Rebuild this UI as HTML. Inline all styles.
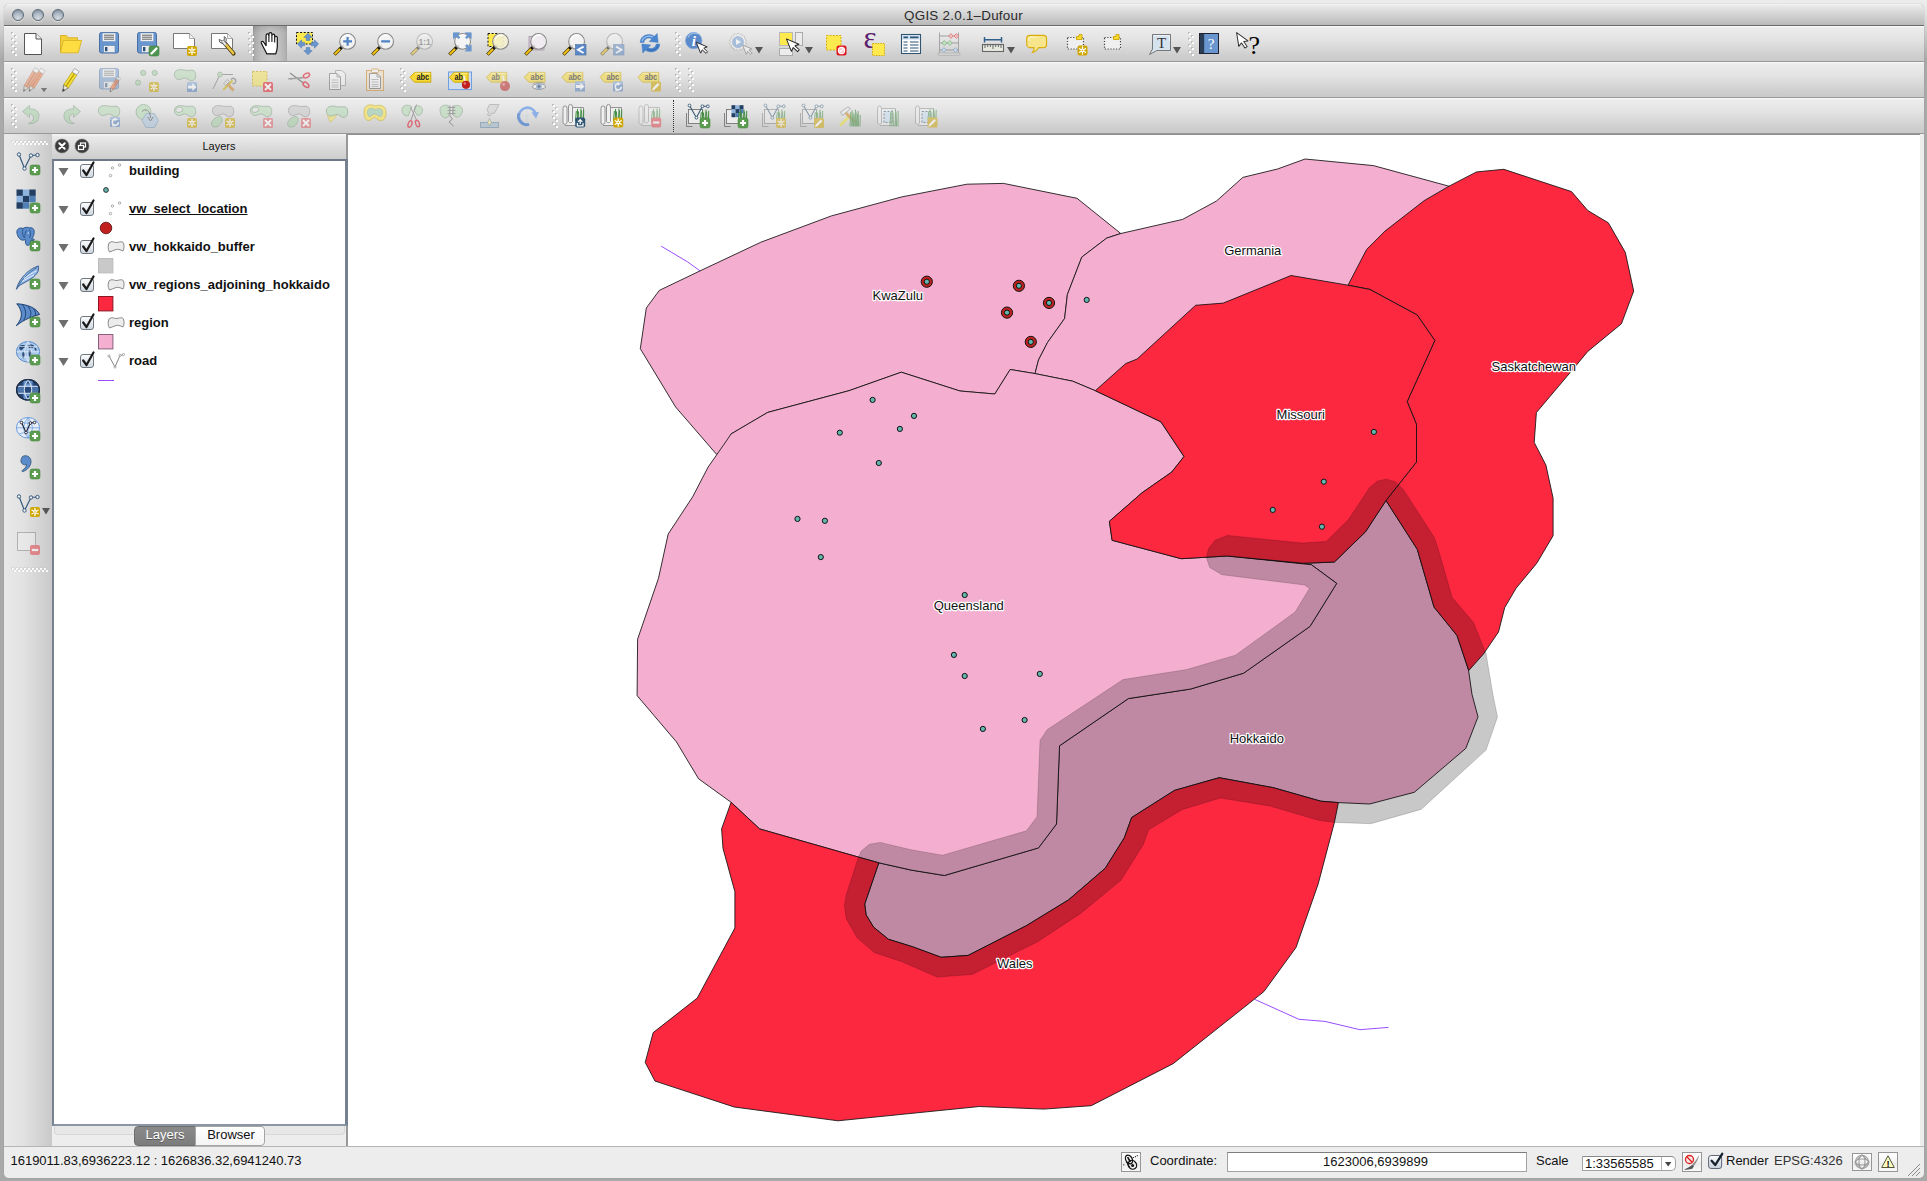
<!DOCTYPE html><html><head><meta charset="utf-8"><title>QGIS 2.0.1-Dufour</title><style>
*{box-sizing:border-box}
html,body{margin:0;padding:0}
body{width:1927px;height:1181px;position:relative;overflow:hidden;background:#a9a9a9;font-family:"Liberation Sans",Arial,sans-serif;font-size:13px;color:#111}
#bgtop{position:absolute;left:0;top:0;width:1927px;height:60px;background:linear-gradient(#ececec 0,#e9e9e9 8px,#a9a9a9 60px)}
#bgtop2{position:absolute;left:8px;top:0;width:1911px;height:5px;background:#ececec}
#win{position:absolute;left:4px;top:4px;width:1920px;height:1174px;border-radius:5px;background:#ededed;overflow:hidden;box-shadow:0 0 1px #777}
.abs{position:absolute}
#title{left:0;top:0;width:1920px;height:22px;background:linear-gradient(#ebebeb 0,#dedede 25%,#c9c9c9 70%,#b9b9b9 100%);border-bottom:1px solid #6b6b6b;border-top:1px solid #f4f4f4}
#title span{position:absolute;left:0;width:1920px;text-align:center;top:3px;font-size:13.4px;letter-spacing:0.25px;color:#2a2a2a;padding-right:1px}
.tl{position:absolute;top:5px;width:12px;height:12px;border-radius:6px;background:radial-gradient(circle at 50% 85%,#d5dae0 0,#b4bfc9 45%,#8b9aa8 80%);border:1px solid #5d6873;box-shadow:0 1px 0 rgba(255,255,255,.5)}
.tb{position:absolute;left:0;width:1920px;height:36px;background:linear-gradient(#fbfbfb 0,#ececec 2px,#e3e3e3 40%,#cecece 85%,#cacaca 100%);border-bottom:1px solid #989898}
#map{position:absolute;left:343px;top:130px;width:1574px;height:1012px;background:#fff;border-left:2px solid #989898;border-top:1px solid #8f8f8f;overflow:hidden}
#map svg{position:absolute;left:0.2px;top:0px}
#lstrip{left:0;top:130px;width:48px;height:1012px;background:linear-gradient(90deg,#e9e9e9 0,#e2e2e2 40%,#c9c9c9 100%)}
#ptitle{left:48px;top:130px;width:294px;height:27px;background:linear-gradient(#f6f6f6 0,#e9e9e9 3px,#d8d8d8 60%,#cbcbcb 100%)}
#ptitle span{position:absolute;left:0;width:100%;text-align:center;top:6px;font-size:11px;padding-left:40px}
#tree{left:48px;top:154px;width:296px;height:968px;background:#fff;border:2px solid #76828f;border-right-width:3px;border-top-color:#6d7986;border-bottom-color:#8a96a3}
#tabs{left:48px;top:1122px;width:295px;height:20px}
#status{left:0;top:1142px;width:1920px;height:32px;background:#ededed;border-top:1px solid #b5b5b5}
.row{position:absolute;left:0;height:19px;font-weight:bold;font-size:13px;white-space:nowrap}
.h{position:absolute;width:6px;height:26px;background-image:radial-gradient(circle at 1.5px 1.5px,#fff 0,#fff 1px,rgba(255,255,255,0) 1.6px),radial-gradient(circle at 1.2px 1.2px,#b5b5b5 0,#b5b5b5 1px,rgba(0,0,0,0) 1.6px);background-size:6px 6px,6px 6px;background-position:0 0,0 0}
.ic{position:absolute;width:24px;height:24px;overflow:visible}
.dd{position:absolute;width:0;height:0;border-left:3.5px solid transparent;border-right:3.5px solid transparent;border-top:5px solid #555}
</style></head><body>
<div id="bgtop"></div><div id="bgtop2"></div>
<div id="win">
<div id="title" class="abs"><span>QGIS 2.0.1&#8211;Dufour</span>
<i class="tl" style="left:8px;top:4px"></i>
<i class="tl" style="left:28px;top:4px"></i>
<i class="tl" style="left:48px;top:4px"></i>
</div>
<div class="tb" style="top:22px"></div>
<div class="tb" style="top:58px"></div>
<div class="tb" style="top:94px"></div>
<div class="abs" style="left:249px;top:22px;width:34px;height:35px;background:linear-gradient(rgba(0,0,0,.10) 0,rgba(0,0,0,0) 7px,rgba(255,255,255,.06) 100%),linear-gradient(90deg,#9a9a9a 0,#aaaaaa 2px,#bcbcbc 8px,#c6c6c6 50%,#bebebe 26px,#b0b0b0 32px,#a2a2a2 100%);"></div>
<i class="abs" style="left:8px;top:29px;width:2px;height:2px;background:#fdfdfd;box-shadow:-1px -1px 0 #bcbcbc"></i><i class="abs" style="left:11px;top:32px;width:2px;height:2px;background:#fdfdfd;box-shadow:-1px -1px 0 #bcbcbc"></i><i class="abs" style="left:8px;top:35px;width:2px;height:2px;background:#fdfdfd;box-shadow:-1px -1px 0 #bcbcbc"></i><i class="abs" style="left:11px;top:38px;width:2px;height:2px;background:#fdfdfd;box-shadow:-1px -1px 0 #bcbcbc"></i><i class="abs" style="left:8px;top:41px;width:2px;height:2px;background:#fdfdfd;box-shadow:-1px -1px 0 #bcbcbc"></i><i class="abs" style="left:11px;top:44px;width:2px;height:2px;background:#fdfdfd;box-shadow:-1px -1px 0 #bcbcbc"></i><i class="abs" style="left:8px;top:47px;width:2px;height:2px;background:#fdfdfd;box-shadow:-1px -1px 0 #bcbcbc"></i><i class="abs" style="left:11px;top:50px;width:2px;height:2px;background:#fdfdfd;box-shadow:-1px -1px 0 #bcbcbc"></i>
<i class="abs" style="left:245px;top:29px;width:2px;height:2px;background:#fdfdfd;box-shadow:-1px -1px 0 #bcbcbc"></i><i class="abs" style="left:248px;top:32px;width:2px;height:2px;background:#fdfdfd;box-shadow:-1px -1px 0 #bcbcbc"></i><i class="abs" style="left:245px;top:35px;width:2px;height:2px;background:#fdfdfd;box-shadow:-1px -1px 0 #bcbcbc"></i><i class="abs" style="left:248px;top:38px;width:2px;height:2px;background:#fdfdfd;box-shadow:-1px -1px 0 #bcbcbc"></i><i class="abs" style="left:245px;top:41px;width:2px;height:2px;background:#fdfdfd;box-shadow:-1px -1px 0 #bcbcbc"></i><i class="abs" style="left:248px;top:44px;width:2px;height:2px;background:#fdfdfd;box-shadow:-1px -1px 0 #bcbcbc"></i><i class="abs" style="left:245px;top:47px;width:2px;height:2px;background:#fdfdfd;box-shadow:-1px -1px 0 #bcbcbc"></i><i class="abs" style="left:248px;top:50px;width:2px;height:2px;background:#fdfdfd;box-shadow:-1px -1px 0 #bcbcbc"></i>
<i class="abs" style="left:672px;top:29px;width:2px;height:2px;background:#fdfdfd;box-shadow:-1px -1px 0 #bcbcbc"></i><i class="abs" style="left:675px;top:32px;width:2px;height:2px;background:#fdfdfd;box-shadow:-1px -1px 0 #bcbcbc"></i><i class="abs" style="left:672px;top:35px;width:2px;height:2px;background:#fdfdfd;box-shadow:-1px -1px 0 #bcbcbc"></i><i class="abs" style="left:675px;top:38px;width:2px;height:2px;background:#fdfdfd;box-shadow:-1px -1px 0 #bcbcbc"></i><i class="abs" style="left:672px;top:41px;width:2px;height:2px;background:#fdfdfd;box-shadow:-1px -1px 0 #bcbcbc"></i><i class="abs" style="left:675px;top:44px;width:2px;height:2px;background:#fdfdfd;box-shadow:-1px -1px 0 #bcbcbc"></i><i class="abs" style="left:672px;top:47px;width:2px;height:2px;background:#fdfdfd;box-shadow:-1px -1px 0 #bcbcbc"></i><i class="abs" style="left:675px;top:50px;width:2px;height:2px;background:#fdfdfd;box-shadow:-1px -1px 0 #bcbcbc"></i>
<i class="abs" style="left:1185px;top:29px;width:2px;height:2px;background:#fdfdfd;box-shadow:-1px -1px 0 #bcbcbc"></i><i class="abs" style="left:1188px;top:32px;width:2px;height:2px;background:#fdfdfd;box-shadow:-1px -1px 0 #bcbcbc"></i><i class="abs" style="left:1185px;top:35px;width:2px;height:2px;background:#fdfdfd;box-shadow:-1px -1px 0 #bcbcbc"></i><i class="abs" style="left:1188px;top:38px;width:2px;height:2px;background:#fdfdfd;box-shadow:-1px -1px 0 #bcbcbc"></i><i class="abs" style="left:1185px;top:41px;width:2px;height:2px;background:#fdfdfd;box-shadow:-1px -1px 0 #bcbcbc"></i><i class="abs" style="left:1188px;top:44px;width:2px;height:2px;background:#fdfdfd;box-shadow:-1px -1px 0 #bcbcbc"></i><i class="abs" style="left:1185px;top:47px;width:2px;height:2px;background:#fdfdfd;box-shadow:-1px -1px 0 #bcbcbc"></i><i class="abs" style="left:1188px;top:50px;width:2px;height:2px;background:#fdfdfd;box-shadow:-1px -1px 0 #bcbcbc"></i>
<i class="abs" style="left:8px;top:65px;width:2px;height:2px;background:#fdfdfd;box-shadow:-1px -1px 0 #bcbcbc"></i><i class="abs" style="left:11px;top:68px;width:2px;height:2px;background:#fdfdfd;box-shadow:-1px -1px 0 #bcbcbc"></i><i class="abs" style="left:8px;top:71px;width:2px;height:2px;background:#fdfdfd;box-shadow:-1px -1px 0 #bcbcbc"></i><i class="abs" style="left:11px;top:74px;width:2px;height:2px;background:#fdfdfd;box-shadow:-1px -1px 0 #bcbcbc"></i><i class="abs" style="left:8px;top:77px;width:2px;height:2px;background:#fdfdfd;box-shadow:-1px -1px 0 #bcbcbc"></i><i class="abs" style="left:11px;top:80px;width:2px;height:2px;background:#fdfdfd;box-shadow:-1px -1px 0 #bcbcbc"></i><i class="abs" style="left:8px;top:83px;width:2px;height:2px;background:#fdfdfd;box-shadow:-1px -1px 0 #bcbcbc"></i><i class="abs" style="left:11px;top:86px;width:2px;height:2px;background:#fdfdfd;box-shadow:-1px -1px 0 #bcbcbc"></i>
<i class="abs" style="left:397px;top:65px;width:2px;height:2px;background:#fdfdfd;box-shadow:-1px -1px 0 #bcbcbc"></i><i class="abs" style="left:400px;top:68px;width:2px;height:2px;background:#fdfdfd;box-shadow:-1px -1px 0 #bcbcbc"></i><i class="abs" style="left:397px;top:71px;width:2px;height:2px;background:#fdfdfd;box-shadow:-1px -1px 0 #bcbcbc"></i><i class="abs" style="left:400px;top:74px;width:2px;height:2px;background:#fdfdfd;box-shadow:-1px -1px 0 #bcbcbc"></i><i class="abs" style="left:397px;top:77px;width:2px;height:2px;background:#fdfdfd;box-shadow:-1px -1px 0 #bcbcbc"></i><i class="abs" style="left:400px;top:80px;width:2px;height:2px;background:#fdfdfd;box-shadow:-1px -1px 0 #bcbcbc"></i><i class="abs" style="left:397px;top:83px;width:2px;height:2px;background:#fdfdfd;box-shadow:-1px -1px 0 #bcbcbc"></i><i class="abs" style="left:400px;top:86px;width:2px;height:2px;background:#fdfdfd;box-shadow:-1px -1px 0 #bcbcbc"></i>
<i class="abs" style="left:672px;top:65px;width:2px;height:2px;background:#fdfdfd;box-shadow:-1px -1px 0 #bcbcbc"></i><i class="abs" style="left:675px;top:68px;width:2px;height:2px;background:#fdfdfd;box-shadow:-1px -1px 0 #bcbcbc"></i><i class="abs" style="left:672px;top:71px;width:2px;height:2px;background:#fdfdfd;box-shadow:-1px -1px 0 #bcbcbc"></i><i class="abs" style="left:675px;top:74px;width:2px;height:2px;background:#fdfdfd;box-shadow:-1px -1px 0 #bcbcbc"></i><i class="abs" style="left:672px;top:77px;width:2px;height:2px;background:#fdfdfd;box-shadow:-1px -1px 0 #bcbcbc"></i><i class="abs" style="left:675px;top:80px;width:2px;height:2px;background:#fdfdfd;box-shadow:-1px -1px 0 #bcbcbc"></i><i class="abs" style="left:672px;top:83px;width:2px;height:2px;background:#fdfdfd;box-shadow:-1px -1px 0 #bcbcbc"></i><i class="abs" style="left:675px;top:86px;width:2px;height:2px;background:#fdfdfd;box-shadow:-1px -1px 0 #bcbcbc"></i>
<i class="abs" style="left:685px;top:65px;width:2px;height:2px;background:#fdfdfd;box-shadow:-1px -1px 0 #bcbcbc"></i><i class="abs" style="left:688px;top:68px;width:2px;height:2px;background:#fdfdfd;box-shadow:-1px -1px 0 #bcbcbc"></i><i class="abs" style="left:685px;top:71px;width:2px;height:2px;background:#fdfdfd;box-shadow:-1px -1px 0 #bcbcbc"></i><i class="abs" style="left:688px;top:74px;width:2px;height:2px;background:#fdfdfd;box-shadow:-1px -1px 0 #bcbcbc"></i><i class="abs" style="left:685px;top:77px;width:2px;height:2px;background:#fdfdfd;box-shadow:-1px -1px 0 #bcbcbc"></i><i class="abs" style="left:688px;top:80px;width:2px;height:2px;background:#fdfdfd;box-shadow:-1px -1px 0 #bcbcbc"></i><i class="abs" style="left:685px;top:83px;width:2px;height:2px;background:#fdfdfd;box-shadow:-1px -1px 0 #bcbcbc"></i><i class="abs" style="left:688px;top:86px;width:2px;height:2px;background:#fdfdfd;box-shadow:-1px -1px 0 #bcbcbc"></i>
<i class="abs" style="left:8px;top:101px;width:2px;height:2px;background:#fdfdfd;box-shadow:-1px -1px 0 #bcbcbc"></i><i class="abs" style="left:11px;top:104px;width:2px;height:2px;background:#fdfdfd;box-shadow:-1px -1px 0 #bcbcbc"></i><i class="abs" style="left:8px;top:107px;width:2px;height:2px;background:#fdfdfd;box-shadow:-1px -1px 0 #bcbcbc"></i><i class="abs" style="left:11px;top:110px;width:2px;height:2px;background:#fdfdfd;box-shadow:-1px -1px 0 #bcbcbc"></i><i class="abs" style="left:8px;top:113px;width:2px;height:2px;background:#fdfdfd;box-shadow:-1px -1px 0 #bcbcbc"></i><i class="abs" style="left:11px;top:116px;width:2px;height:2px;background:#fdfdfd;box-shadow:-1px -1px 0 #bcbcbc"></i><i class="abs" style="left:8px;top:119px;width:2px;height:2px;background:#fdfdfd;box-shadow:-1px -1px 0 #bcbcbc"></i><i class="abs" style="left:11px;top:122px;width:2px;height:2px;background:#fdfdfd;box-shadow:-1px -1px 0 #bcbcbc"></i>
<i class="abs" style="left:549px;top:101px;width:2px;height:2px;background:#fdfdfd;box-shadow:-1px -1px 0 #bcbcbc"></i><i class="abs" style="left:552px;top:104px;width:2px;height:2px;background:#fdfdfd;box-shadow:-1px -1px 0 #bcbcbc"></i><i class="abs" style="left:549px;top:107px;width:2px;height:2px;background:#fdfdfd;box-shadow:-1px -1px 0 #bcbcbc"></i><i class="abs" style="left:552px;top:110px;width:2px;height:2px;background:#fdfdfd;box-shadow:-1px -1px 0 #bcbcbc"></i><i class="abs" style="left:549px;top:113px;width:2px;height:2px;background:#fdfdfd;box-shadow:-1px -1px 0 #bcbcbc"></i><i class="abs" style="left:552px;top:116px;width:2px;height:2px;background:#fdfdfd;box-shadow:-1px -1px 0 #bcbcbc"></i><i class="abs" style="left:549px;top:119px;width:2px;height:2px;background:#fdfdfd;box-shadow:-1px -1px 0 #bcbcbc"></i><i class="abs" style="left:552px;top:122px;width:2px;height:2px;background:#fdfdfd;box-shadow:-1px -1px 0 #bcbcbc"></i>
<div class="abs" style="left:669px;top:96px;width:0;height:32px;border-left:1px dotted #333"></div>
<div id="lstrip" class="abs"></div>
<i class="abs" style="left:8px;top:137px;width:2px;height:2px;background:#fbfbfb;box-shadow:-0.5px -0.5px 0 #c2c2c2"></i><i class="abs" style="left:10px;top:139px;width:2px;height:2px;background:#fbfbfb;box-shadow:-0.5px -0.5px 0 #c2c2c2"></i><i class="abs" style="left:12px;top:137px;width:2px;height:2px;background:#fbfbfb;box-shadow:-0.5px -0.5px 0 #c2c2c2"></i><i class="abs" style="left:14px;top:139px;width:2px;height:2px;background:#fbfbfb;box-shadow:-0.5px -0.5px 0 #c2c2c2"></i><i class="abs" style="left:16px;top:137px;width:2px;height:2px;background:#fbfbfb;box-shadow:-0.5px -0.5px 0 #c2c2c2"></i><i class="abs" style="left:18px;top:139px;width:2px;height:2px;background:#fbfbfb;box-shadow:-0.5px -0.5px 0 #c2c2c2"></i><i class="abs" style="left:20px;top:137px;width:2px;height:2px;background:#fbfbfb;box-shadow:-0.5px -0.5px 0 #c2c2c2"></i><i class="abs" style="left:22px;top:139px;width:2px;height:2px;background:#fbfbfb;box-shadow:-0.5px -0.5px 0 #c2c2c2"></i><i class="abs" style="left:24px;top:137px;width:2px;height:2px;background:#fbfbfb;box-shadow:-0.5px -0.5px 0 #c2c2c2"></i><i class="abs" style="left:26px;top:139px;width:2px;height:2px;background:#fbfbfb;box-shadow:-0.5px -0.5px 0 #c2c2c2"></i><i class="abs" style="left:28px;top:137px;width:2px;height:2px;background:#fbfbfb;box-shadow:-0.5px -0.5px 0 #c2c2c2"></i><i class="abs" style="left:30px;top:139px;width:2px;height:2px;background:#fbfbfb;box-shadow:-0.5px -0.5px 0 #c2c2c2"></i><i class="abs" style="left:32px;top:137px;width:2px;height:2px;background:#fbfbfb;box-shadow:-0.5px -0.5px 0 #c2c2c2"></i><i class="abs" style="left:34px;top:139px;width:2px;height:2px;background:#fbfbfb;box-shadow:-0.5px -0.5px 0 #c2c2c2"></i><i class="abs" style="left:36px;top:137px;width:2px;height:2px;background:#fbfbfb;box-shadow:-0.5px -0.5px 0 #c2c2c2"></i><i class="abs" style="left:38px;top:139px;width:2px;height:2px;background:#fbfbfb;box-shadow:-0.5px -0.5px 0 #c2c2c2"></i><i class="abs" style="left:40px;top:137px;width:2px;height:2px;background:#fbfbfb;box-shadow:-0.5px -0.5px 0 #c2c2c2"></i><i class="abs" style="left:42px;top:139px;width:2px;height:2px;background:#fbfbfb;box-shadow:-0.5px -0.5px 0 #c2c2c2"></i>
<i class="abs" style="left:8px;top:564px;width:2px;height:2px;background:#fbfbfb;box-shadow:-0.5px -0.5px 0 #c2c2c2"></i><i class="abs" style="left:10px;top:566px;width:2px;height:2px;background:#fbfbfb;box-shadow:-0.5px -0.5px 0 #c2c2c2"></i><i class="abs" style="left:12px;top:564px;width:2px;height:2px;background:#fbfbfb;box-shadow:-0.5px -0.5px 0 #c2c2c2"></i><i class="abs" style="left:14px;top:566px;width:2px;height:2px;background:#fbfbfb;box-shadow:-0.5px -0.5px 0 #c2c2c2"></i><i class="abs" style="left:16px;top:564px;width:2px;height:2px;background:#fbfbfb;box-shadow:-0.5px -0.5px 0 #c2c2c2"></i><i class="abs" style="left:18px;top:566px;width:2px;height:2px;background:#fbfbfb;box-shadow:-0.5px -0.5px 0 #c2c2c2"></i><i class="abs" style="left:20px;top:564px;width:2px;height:2px;background:#fbfbfb;box-shadow:-0.5px -0.5px 0 #c2c2c2"></i><i class="abs" style="left:22px;top:566px;width:2px;height:2px;background:#fbfbfb;box-shadow:-0.5px -0.5px 0 #c2c2c2"></i><i class="abs" style="left:24px;top:564px;width:2px;height:2px;background:#fbfbfb;box-shadow:-0.5px -0.5px 0 #c2c2c2"></i><i class="abs" style="left:26px;top:566px;width:2px;height:2px;background:#fbfbfb;box-shadow:-0.5px -0.5px 0 #c2c2c2"></i><i class="abs" style="left:28px;top:564px;width:2px;height:2px;background:#fbfbfb;box-shadow:-0.5px -0.5px 0 #c2c2c2"></i><i class="abs" style="left:30px;top:566px;width:2px;height:2px;background:#fbfbfb;box-shadow:-0.5px -0.5px 0 #c2c2c2"></i><i class="abs" style="left:32px;top:564px;width:2px;height:2px;background:#fbfbfb;box-shadow:-0.5px -0.5px 0 #c2c2c2"></i><i class="abs" style="left:34px;top:566px;width:2px;height:2px;background:#fbfbfb;box-shadow:-0.5px -0.5px 0 #c2c2c2"></i><i class="abs" style="left:36px;top:564px;width:2px;height:2px;background:#fbfbfb;box-shadow:-0.5px -0.5px 0 #c2c2c2"></i><i class="abs" style="left:38px;top:566px;width:2px;height:2px;background:#fbfbfb;box-shadow:-0.5px -0.5px 0 #c2c2c2"></i><i class="abs" style="left:40px;top:564px;width:2px;height:2px;background:#fbfbfb;box-shadow:-0.5px -0.5px 0 #c2c2c2"></i><i class="abs" style="left:42px;top:566px;width:2px;height:2px;background:#fbfbfb;box-shadow:-0.5px -0.5px 0 #c2c2c2"></i>
<div id="map" style="left:342px"><svg width="1572" height="1010" viewBox="348 135 1572 1010">
<g fill="none" stroke="#9b4dff" stroke-width="1">
<polyline points="661.2,246.2 687.8,262.0 700.0,270.9"/><polyline points="1254.8,999.4 1298.9,1019.3 1324.9,1021.4 1359.9,1029.7 1388.5,1027.4"/></g>
<g fill="#f4afd0" stroke="#111" stroke-width=".85" stroke-linejoin="round">
<polygon points="640.3,348.7 646.3,308.0 659.3,290.4 700.0,270.9 760.9,242.2 831.4,215.9 901.8,196.9 966.9,184.2 1003.5,183.4 1077.0,198.3 1120.8,233.5 1106.7,238.1 1081.8,257.1 1067.4,294.5 1064.6,318.5 1047.5,342.5 1038.5,360.0 1035.0,373.6 1010.2,369.5 994.8,394.0 960.0,391.0 901.3,372.2 849.0,390.7 767.7,412.4 731.0,434.0 740.0,470.0 716.5,454.3 675.6,407.0"/>
<polygon points="1120.8,233.5 1182.6,219.4 1216.5,201.0 1242.8,177.4 1277.5,169.0 1305.1,159.0 1373.4,165.6 1449.0,186.2 1420.0,260.0 1360.0,300.0 1200.0,400.0 1095.3,390.7 1072.7,381.2 1035.0,373.6 1038.5,360.0 1047.5,342.5 1064.6,318.5 1067.4,294.5 1081.8,257.1 1106.7,238.1"/>
<polygon points="1227.3,556.0 1303.2,563.3 1334.4,562.0 1365.5,531.8 1386.0,500.5 1417.3,549.4 1434.0,607.0 1457.0,635.5 1468.5,670.0 1472.0,694.4 1478.0,716.8 1465.8,748.4 1414.3,792.3 1369.6,804.0 1338.4,802.6 1320.8,801.2 1273.4,787.7 1219.2,777.7 1174.5,790.4 1131.7,817.5 1124.3,837.8 1105.3,868.2 1068.5,899.9 1026.5,925.6 968.2,955.4 941.1,957.3 912.7,946.8 888.3,939.2 873.4,927.0 866.1,914.8 864.7,904.0 878.8,862.8 911.3,870.1 944.4,875.5 1038.5,847.9 1056.5,824.0 1059.5,745.8 1128.4,698.6 1190.7,689.0 1243.6,673.2 1310.0,626.4 1336.7,583.4 1311.3,564.7"/>
<polygon points="727.0,440.0 731.0,434.0 767.7,412.4 849.0,390.7 901.3,372.2 960.0,391.0 994.8,394.0 1010.2,369.5 1035.0,373.6 1072.7,381.2 1095.3,390.7 1160.9,421.8 1184.0,456.5 1171.8,472.0 1142.0,492.8 1109.4,521.3 1112.1,540.3 1181.2,558.7 1227.3,556.0 1311.3,564.7 1336.7,583.4 1310.0,626.4 1243.6,673.2 1190.7,689.0 1128.4,698.6 1059.5,745.8 1056.5,824.0 1038.5,847.9 944.4,875.5 911.3,870.1 878.8,862.8 858.5,857.1 759.6,828.9 731.1,802.3 698.6,778.8 676.5,742.0 637.1,695.6 637.6,639.2 658.5,578.2 668.2,534.0 692.6,496.9 708.1,467.1"/>
</g>
<g fill="#fb2840" stroke="#111" stroke-width=".85" stroke-linejoin="round">
<polygon points="1348.0,285.2 1366.6,249.5 1385.0,231.1 1424.1,200.7 1449.0,186.2 1476.5,171.9 1503.8,169.3 1571.5,191.6 1587.8,210.5 1608.3,222.8 1625.3,252.3 1633.7,291.1 1621.4,323.8 1587.8,351.4 1563.9,380.0 1536.4,412.5 1534.2,442.4 1545.9,465.0 1553.1,498.2 1553.1,535.7 1536.8,563.2 1516.2,588.1 1504.7,607.6 1498.5,632.0 1483.4,654.1 1468.8,670.5 1457.0,635.5 1434.0,607.0 1417.3,549.4 1386.0,500.5 1416.5,462.0 1416.5,424.5 1407.2,401.6 1434.8,340.5 1417.2,315.0 1369.8,289.4"/>
<polygon points="1095.3,390.7 1125.7,363.6 1137.1,359.0 1195.6,305.3 1223.3,303.1 1291.0,275.5 1348.0,285.2 1369.8,289.4 1417.2,315.0 1434.8,340.5 1407.2,401.6 1416.5,424.5 1416.5,462.0 1386.0,500.5 1365.5,531.8 1334.4,562.0 1303.2,563.3 1227.3,556.0 1181.2,558.7 1112.1,540.3 1109.4,521.3 1142.0,492.8 1171.8,472.0 1184.0,456.5 1160.9,421.8"/>
<polygon points="731.1,802.3 759.6,828.9 858.5,857.1 878.8,862.8 864.7,904.0 866.1,914.8 873.4,927.0 888.3,939.2 912.7,946.8 941.1,957.3 968.2,955.4 1026.5,925.6 1068.5,899.9 1105.3,868.2 1124.3,837.8 1131.7,817.5 1174.5,790.4 1219.2,777.7 1273.4,787.7 1320.8,801.2 1338.4,802.6 1334.4,822.4 1318.2,883.9 1296.0,947.5 1263.9,991.6 1173.1,1063.7 1091.2,1105.7 1043.8,1109.1 979.4,1106.5 838.0,1120.8 734.2,1107.0 655.0,1081.1 645.2,1062.4 653.2,1032.6 697.3,998.0 734.9,928.0 734.9,891.7 723.0,848.4 721.6,828.9"/>
</g>
<polygon points="1227.3,535.4 1301.8,543.0 1326.2,541.6 1348.5,519.5 1369.7,487.5 1377.6,481.0 1386.2,479.2 1395.5,481.7 1403.5,489.8 1434.3,537.5 1438.2,549.1 1452.2,597.5 1473.5,622.5 1486.1,653.8 1492.9,694.4 1497.5,717.0 1486.1,750.0 1421.1,809.4 1370.9,823.7 1334.4,822.4 1318.1,820.2 1269.3,805.9 1220.5,798.0 1182.6,809.4 1148.7,829.7 1143.3,844.6 1121.0,880.3 1080.7,913.4 1037.3,941.9 972.3,974.4 937.1,977.1 901.8,961.7 874.7,952.7 857.1,937.8 846.3,918.9 844.4,905.3 846.3,894.5 858.5,857.1 861.2,851.1 869.3,844.3 880.2,842.4 911.3,849.8 942.5,855.2 1026.5,830.8 1037.0,816.7 1040.0,740.5 1047.1,729.7 1123.0,679.6 1186.7,669.5 1235.4,655.2 1295.1,612.1 1309.4,588.5 1304.6,585.0 1221.9,574.7 1209.7,567.4 1206.5,558.0 1208.3,549.0 1215.1,540.3" fill="#000" fill-opacity="0.217" stroke="#000" stroke-opacity="0.16" stroke-width="1" stroke-linejoin="round"/>
<g fill="#c0211f" stroke="#111" stroke-width="1">
<circle cx="926.8" cy="281.7" r="5.6"/>
<circle cx="1018.9" cy="285.8" r="5.6"/>
<circle cx="1049.0" cy="302.9" r="5.6"/>
<circle cx="1007.0" cy="312.6" r="5.6"/>
<circle cx="1030.8" cy="341.9" r="5.6"/>
</g>
<g fill="#62b6ae" stroke="#111" stroke-width="1">
<circle cx="872.6" cy="399.9" r="2.6"/>
<circle cx="914.0" cy="415.9" r="2.6"/>
<circle cx="899.9" cy="428.9" r="2.6"/>
<circle cx="839.8" cy="432.7" r="2.6"/>
<circle cx="878.8" cy="463.0" r="2.6"/>
<circle cx="797.5" cy="518.9" r="2.6"/>
<circle cx="824.9" cy="520.8" r="2.6"/>
<circle cx="820.8" cy="557.1" r="2.6"/>
<circle cx="964.7" cy="595.0" r="2.6"/>
<circle cx="953.9" cy="654.9" r="2.6"/>
<circle cx="964.7" cy="676.0" r="2.6"/>
<circle cx="1039.8" cy="673.9" r="2.6"/>
<circle cx="1024.6" cy="720.0" r="2.6"/>
<circle cx="982.9" cy="728.9" r="2.6"/>
<circle cx="1086.7" cy="299.9" r="2.6"/>
<circle cx="1373.9" cy="431.9" r="2.6"/>
<circle cx="1323.8" cy="481.7" r="2.6"/>
<circle cx="1272.8" cy="509.9" r="2.6"/>
<circle cx="1321.9" cy="526.7" r="2.6"/>
<circle cx="926.8" cy="281.7" r="2.6"/>
<circle cx="1018.9" cy="285.8" r="2.6"/>
<circle cx="1049.0" cy="302.9" r="2.6"/>
<circle cx="1007.0" cy="312.6" r="2.6"/>
<circle cx="1030.8" cy="341.9" r="2.6"/>
</g>
<g font-family="'Liberation Sans',Arial,sans-serif" font-size="13" text-anchor="middle" fill="#111" stroke="#fff" stroke-width="2.4" stroke-linejoin="round" paint-order="stroke">
<text x="897.8" y="300.3">KwaZulu</text>
<text x="1252.8" y="255.3">Germania</text>
<text x="1533.8" y="371.3">Saskatchewan</text>
<text x="1300.8" y="419.3">Missouri</text>
<text x="968.8" y="610.3">Queensland</text>
<text x="1256.8" y="743.3">Hokkaido</text>
<text x="1014.8" y="968.3">Wales</text>
</g>
</svg></div>
<div id="ptitle" class="abs"><span>Layers</span></div>
<div id="tree" class="abs" style="top:155px;height:967px"></div>
<svg class="abs" style="left:54px;top:163px" width="12" height="10"><polygon points="0.5,1 10.5,1 5.5,9" fill="#6e6e6e"/></svg>
<svg class="abs" style="left:75px;top:157px" width="18" height="18" viewBox="0 0 18 18"><defs><linearGradient id="cb167" x1="0" y1="0" x2="0" y2="1"><stop offset="0" stop-color="#fdfdfd"/><stop offset="1" stop-color="#cfd6df"/></linearGradient></defs><rect x="1.5" y="3.5" width="13" height="13" rx="2.5" fill="url(#cb167)" stroke="#6f7780"/><path d="M4.2 9.5 L7.5 14 L14.5 1.5" fill="none" stroke="#1a1a1a" stroke-width="2.2" stroke-linecap="round" stroke-linejoin="round"/></svg>
<svg class="abs" style="left:100px;top:159px" width="18" height="16" viewBox="0 0 18 16"><g fill="#fff" stroke="#8a8a8a" stroke-width="0.7"><circle cx="6.5" cy="12.600" r="1.2"/><circle cx="8.5" cy="5" r="1.2"/><circle cx="15.5" cy="2" r="1.2"/></g></svg>
<div class="row" style="left:125px;top:157px;line-height:19px;">building</div>
<svg class="abs" style="left:54px;top:201px" width="12" height="10"><polygon points="0.5,1 10.5,1 5.5,9" fill="#6e6e6e"/></svg>
<svg class="abs" style="left:75px;top:195px" width="18" height="18" viewBox="0 0 18 18"><defs><linearGradient id="cb205" x1="0" y1="0" x2="0" y2="1"><stop offset="0" stop-color="#fdfdfd"/><stop offset="1" stop-color="#cfd6df"/></linearGradient></defs><rect x="1.5" y="3.5" width="13" height="13" rx="2.5" fill="url(#cb205)" stroke="#6f7780"/><path d="M4.2 9.5 L7.5 14 L14.5 1.5" fill="none" stroke="#1a1a1a" stroke-width="2.2" stroke-linecap="round" stroke-linejoin="round"/></svg>
<svg class="abs" style="left:100px;top:197px" width="18" height="16" viewBox="0 0 18 16"><g fill="#fff" stroke="#8a8a8a" stroke-width="0.7"><circle cx="6.5" cy="12.600" r="1.2"/><circle cx="8.5" cy="5" r="1.2"/><circle cx="15.5" cy="2" r="1.2"/></g></svg>
<div class="row" style="left:125px;top:195px;line-height:19px;text-decoration:underline;">vw_select_location</div>
<svg class="abs" style="left:54px;top:239px" width="12" height="10"><polygon points="0.5,1 10.5,1 5.5,9" fill="#6e6e6e"/></svg>
<svg class="abs" style="left:75px;top:233px" width="18" height="18" viewBox="0 0 18 18"><defs><linearGradient id="cb243" x1="0" y1="0" x2="0" y2="1"><stop offset="0" stop-color="#fdfdfd"/><stop offset="1" stop-color="#cfd6df"/></linearGradient></defs><rect x="1.5" y="3.5" width="13" height="13" rx="2.5" fill="url(#cb243)" stroke="#6f7780"/><path d="M4.2 9.5 L7.5 14 L14.5 1.5" fill="none" stroke="#1a1a1a" stroke-width="2.2" stroke-linecap="round" stroke-linejoin="round"/></svg>
<svg class="abs" style="left:103px;top:236px" width="18" height="14" viewBox="0 0 18 14"><path d="M2 3 C5 0.5 7 2.5 9 2.5 C12 2.5 15 0.5 16.5 3 C17.5 6 17 9 16 11 C13 9.5 11 9 9 9.5 C7 10 4.5 11.5 2.5 12 C0.5 9 1 5.5 2 3Z" fill="#ececec" stroke="#7e7e7e" stroke-width="0.9"/></svg>
<div class="row" style="left:125px;top:233px;line-height:19px;">vw_hokkaido_buffer</div>
<svg class="abs" style="left:54px;top:277px" width="12" height="10"><polygon points="0.5,1 10.5,1 5.5,9" fill="#6e6e6e"/></svg>
<svg class="abs" style="left:75px;top:271px" width="18" height="18" viewBox="0 0 18 18"><defs><linearGradient id="cb281" x1="0" y1="0" x2="0" y2="1"><stop offset="0" stop-color="#fdfdfd"/><stop offset="1" stop-color="#cfd6df"/></linearGradient></defs><rect x="1.5" y="3.5" width="13" height="13" rx="2.5" fill="url(#cb281)" stroke="#6f7780"/><path d="M4.2 9.5 L7.5 14 L14.5 1.5" fill="none" stroke="#1a1a1a" stroke-width="2.2" stroke-linecap="round" stroke-linejoin="round"/></svg>
<svg class="abs" style="left:103px;top:274px" width="18" height="14" viewBox="0 0 18 14"><path d="M2 3 C5 0.5 7 2.5 9 2.5 C12 2.5 15 0.5 16.5 3 C17.5 6 17 9 16 11 C13 9.5 11 9 9 9.5 C7 10 4.5 11.5 2.5 12 C0.5 9 1 5.5 2 3Z" fill="#ececec" stroke="#7e7e7e" stroke-width="0.9"/></svg>
<div class="row" style="left:125px;top:271px;line-height:19px;">vw_regions_adjoining_hokkaido</div>
<svg class="abs" style="left:54px;top:315px" width="12" height="10"><polygon points="0.5,1 10.5,1 5.5,9" fill="#6e6e6e"/></svg>
<svg class="abs" style="left:75px;top:309px" width="18" height="18" viewBox="0 0 18 18"><defs><linearGradient id="cb319" x1="0" y1="0" x2="0" y2="1"><stop offset="0" stop-color="#fdfdfd"/><stop offset="1" stop-color="#cfd6df"/></linearGradient></defs><rect x="1.5" y="3.5" width="13" height="13" rx="2.5" fill="url(#cb319)" stroke="#6f7780"/><path d="M4.2 9.5 L7.5 14 L14.5 1.5" fill="none" stroke="#1a1a1a" stroke-width="2.2" stroke-linecap="round" stroke-linejoin="round"/></svg>
<svg class="abs" style="left:103px;top:312px" width="18" height="14" viewBox="0 0 18 14"><path d="M2 3 C5 0.5 7 2.5 9 2.5 C12 2.5 15 0.5 16.5 3 C17.5 6 17 9 16 11 C13 9.5 11 9 9 9.5 C7 10 4.5 11.5 2.5 12 C0.5 9 1 5.5 2 3Z" fill="#ececec" stroke="#7e7e7e" stroke-width="0.9"/></svg>
<div class="row" style="left:125px;top:309px;line-height:19px;">region</div>
<svg class="abs" style="left:54px;top:353px" width="12" height="10"><polygon points="0.5,1 10.5,1 5.5,9" fill="#6e6e6e"/></svg>
<svg class="abs" style="left:75px;top:347px" width="18" height="18" viewBox="0 0 18 18"><defs><linearGradient id="cb357" x1="0" y1="0" x2="0" y2="1"><stop offset="0" stop-color="#fdfdfd"/><stop offset="1" stop-color="#cfd6df"/></linearGradient></defs><rect x="1.5" y="3.5" width="13" height="13" rx="2.5" fill="url(#cb357)" stroke="#6f7780"/><path d="M4.2 9.5 L7.5 14 L14.5 1.5" fill="none" stroke="#1a1a1a" stroke-width="2.2" stroke-linecap="round" stroke-linejoin="round"/></svg>
<svg class="abs" style="left:103px;top:349px" width="18" height="16" viewBox="0 0 18 16"><path d="M2 3 L8 14 L13 2.5 L16.5 1.5" fill="none" stroke="#777" stroke-width="0.9"/><g fill="#fff" stroke="#8a8a8a" stroke-width="0.7"><circle cx="2" cy="3" r="1.1"/><circle cx="8" cy="14" r="1.1"/><circle cx="13" cy="2.5" r="1.1"/><circle cx="16.5" cy="1.5" r="1.1"/></g></svg>
<div class="row" style="left:125px;top:347px;line-height:19px;">road</div>
<svg class="abs" style="left:90px;top:175.600px" width="30" height="210" viewBox="0 0 30 210">
<circle cx="12" cy="10" r="2.400" fill="#62b6ae" stroke="#222" stroke-width="0.9"/>
<circle cx="12" cy="48" r="5.8" fill="#c0211f" stroke="#5a0e0e" stroke-width="0.8"/>
<rect x="4.500" y="78.500" width="14.400" height="14.400" fill="#c9c9c9" stroke="#bdbdbd"/>
<rect x="4.500" y="116.500" width="14.400" height="14.400" fill="#fb2840" stroke="#8a1622"/>
<rect x="4.500" y="154.500" width="14.400" height="14.400" fill="#f4afd0" stroke="#86607a"/>
<line x1="4" y1="200.5" x2="20" y2="200.5" stroke="#9b4dff" stroke-width="1"/>
</svg>
<svg class="abs" style="left:50px;top:134px" width="40" height="16" viewBox="0 0 40 16"><circle cx="8" cy="8" r="7" fill="#3c3c3c" stroke="#7a7a7a" stroke-width=".6"/><path d="M5.3 5.3 L10.7 10.7 M10.7 5.3 L5.3 10.7" stroke="#fff" stroke-width="2" stroke-linecap="round"/><circle cx="28" cy="8" r="7" fill="#3c3c3c" stroke="#7a7a7a" stroke-width=".6"/><rect x="26.5" y="5" width="5" height="4" fill="none" stroke="#fff" stroke-width="1.2"/><rect x="24.5" y="7.5" width="5" height="4" fill="#3c3c3c" stroke="#fff" stroke-width="1.2"/></svg>
<div id="tabs" class="abs">
<div class="abs" style="left:2px;top:0;width:291px;height:9px;border:1px solid #d6d6d6;border-top:none;border-radius:0 0 4px 4px;background:#e7e7e7"></div>
<div class="abs" style="left:82px;top:0px;width:62px;height:20px;background:linear-gradient(#8a8a8a,#7c7c7c);border:1px solid #6d6d6d;border-radius:4px 0 0 4px;color:#fff;text-align:center;font-size:13px;line-height:16.5px;text-shadow:0 1px 0 #555">Layers</div>
<div class="abs" style="left:143px;top:0px;width:70px;height:20px;background:linear-gradient(#fff,#f4f4f4);border:1px solid #a5a5a5;border-radius:0 4px 4px 0;text-align:center;font-size:13px;line-height:16.5px;padding-left:2px">Browser</div>
</div>
<div id="status" class="abs">
<div class="abs" style="left:6.5px;top:6px;font-size:13px;line-height:16px;white-space:nowrap;letter-spacing:-0.02px">1619011.83,6936223.12 : 1626836.32,6941240.73</div>
<div class="abs" style="left:1117px;top:5px;width:20px;height:20px;border:1px solid #969696;background:linear-gradient(#ffffff,#f6f6f6 40%,#ececec 60%,#f9f9f9)"></div>
<svg class="abs" style="left:1118px;top:6px" width="18" height="18" viewBox="0 0 18 18"><g fill="none" stroke="#111"><ellipse cx="7" cy="6.5" rx="3.2" ry="4.6" transform="rotate(-28 7 6.5)" stroke-width="1.3"/><path d="M5.6 4.2 L8.4 9" stroke-width="1.6"/><ellipse cx="10.4" cy="11.8" rx="4" ry="4.6" transform="rotate(-35 10.4 11.8)" stroke-width="1.3"/><path d="M4.6 8.6 C5.5 11 6.2 12.5 7.6 14.4" stroke-width="1.2"/></g><circle cx="10.6" cy="12.6" r="1.5" fill="#111"/><circle cx="11.3" cy="4.600" r=".7" fill="#111"/><circle cx="13.400" cy="3.700" r=".6" fill="#111"/><circle cx="15.300" cy="2.700" r=".6" fill="#111"/><circle cx="1.800" cy="11.800" r=".6" fill="#111"/></svg>
<div class="abs" style="left:1146px;top:6px;font-size:13px;line-height:16px">Coordinate:</div>
<div class="abs" style="left:1223px;top:5px;width:300px;height:20px;border:1px solid #a2a2a2;border-top-color:#7d7d7d;background:#fff;text-align:center;font-size:13px;line-height:17px;padding-right:3px">1623006,6939899</div>
<div class="abs" style="left:1532px;top:6px;font-size:13px;line-height:16px">Scale</div>
<div class="abs" style="left:1578px;top:9px;width:94px;height:15px;border:1px solid #a2a2a2;border-top-color:#8a8a8a;border-radius:0 5px 5px 0;background:#fff;font-size:13px;line-height:14px;padding-left:2px;overflow:hidden">1:33565585<i class="abs" style="left:78px;top:0;height:14px;border-left:1px solid #b5b5b5"></i><svg class="abs" style="left:82px;top:5px" width="7" height="5" viewBox="0 0 7 5"><path d="M0 0 H6.400 L3.200 4.600Z" fill="#444"/></svg></div>
<div class="abs" style="left:1678px;top:5px;width:20px;height:20px;border:1px solid #969696;background:linear-gradient(#ffffff,#f6f6f6 40%,#ececec 60%,#f9f9f9)"></div>
<svg class="abs" style="left:1679px;top:6px" width="18" height="18" viewBox="0 0 18 18"><path d="M16.500 1.500 C14 6 11 10 8.500 12.500 L10.500 13.500 C13 10 15.500 6 16.500 1.500Z" fill="#8e8e8e"/><path d="M9 12 C7 13.500 4 15.500 1 16.500 C4 17 8 16.500 9.500 15.500 L10.800 13.300Z" fill="#555"/><circle cx="6.500" cy="6.500" r="4" fill="#f4e4e4" fill-opacity=".6" stroke="#e0201f" stroke-width="1.3"/><path d="M3.800 3.800 L9.200 9.200" stroke="#e0201f" stroke-width="1.3"/></svg>
<svg class="abs" style="left:1702px;top:3px" width="20" height="22" viewBox="0 0 20 22"><defs><linearGradient id="cbs" x1="0" y1="0" x2="0" y2="1"><stop offset="0" stop-color="#fdfdfd"/><stop offset="1" stop-color="#c6d0db"/></linearGradient></defs><rect x="2.600" y="5.500" width="13" height="13" rx="2.500" fill="url(#cbs)" stroke="#5e6577"/><path d="M5.600 10.800 L9.300 15 L16.200 3.800" fill="none" stroke="#14202d" stroke-width="2.300" stroke-linecap="round" stroke-linejoin="round"/></svg>
<div class="abs" style="left:1722px;top:6px;font-size:13px;line-height:16px">Render</div>
<div class="abs" style="left:1770px;top:6px;font-size:13px;line-height:16px;color:#333">EPSG:4326</div>
<div class="abs" style="left:1848px;top:6px;width:20px;height:18px;border:1px solid #969696;background:linear-gradient(#ffffff,#f6f6f6 40%,#ececec 60%,#f9f9f9)"></div>
<svg class="abs" style="left:1849px;top:7px" width="18" height="16" viewBox="0 0 18 16" opacity=".55"><g fill="none" stroke="#555" stroke-width="1.1"><circle cx="9" cy="8" r="6.600"/><ellipse cx="9" cy="8" rx="3" ry="6.600"/><ellipse cx="9" cy="8" rx="6.600" ry="3"/><path d="M9 .8 L16 8 L9 15.200 L2 8Z"/></g></svg>
<div class="abs" style="left:1874px;top:5px;width:20px;height:20px;border:1px solid #969696;background:linear-gradient(#ffffff,#f6f6f6 40%,#ececec 60%,#f9f9f9)"></div>
<svg class="abs" style="left:1875px;top:6px" width="18" height="18" viewBox="0 0 18 18"><path d="M9 2.800 L15.300 14.500 H2.700Z" fill="#fbfbc4" stroke="#55553a" stroke-width="1" stroke-linejoin="round"/><text x="9" y="13.600" font-family="'Liberation Sans',Arial,sans-serif" font-weight="bold" font-size="9.500" text-anchor="middle" fill="#111">!</text></svg>
<svg class="abs" style="left:1903px;top:16px" width="14" height="14" viewBox="0 0 14 14"><path d="M1 13 L13 1 M5 13 L13 5 M9 13 L13 9" stroke="#8a8a8a" stroke-width="1"/></svg>
</div>
<svg class="ic" style="left:17.0px;top:28.0px" width="24" height="24" viewBox="0 0 24 24"><path d="M3.5 1.5 H15 L20.5 7 V22.5 H3.5Z" fill="#fff" stroke="#555" stroke-linejoin="round"/><path d="M15 1.5 V7 H20.5" fill="#eee" stroke="#555" stroke-linejoin="round"/></svg>
<svg class="ic" style="left:54.0px;top:28.0px" width="24" height="24" viewBox="0 0 24 24"><path d="M2.5 20.5 V3.5 H8.5 L9.8 5.8 H19.5 V9" fill="#f3cf3a" stroke="#d9b429" stroke-linejoin="round"/><path d="M2.5 20.8 L5.2 8.5 H23.6 L20.2 20.8Z" fill="#fedd43" stroke="#dcb82c" stroke-linejoin="round"/></svg>
<svg class="ic" style="left:93.0px;top:28.0px" width="24" height="24" viewBox="0 0 24 24"><g opacity="1"><rect x="2.5" y=".5" width="19" height="20.5" rx="2" fill="#6a96cf" stroke="#466fa5"/><rect x="5.5" y="1" width="13" height="8.2" fill="#f1f1f1" stroke="#8aa5c8" stroke-width=".5"/><path d="M7 3.2 h10 M7 5.2 h10 M7 7.2 h10" stroke="#555" stroke-width=".9"/><rect x="6.5" y="13.5" width="11.5" height="7" fill="#ececec" stroke="#5b81b4" stroke-width=".6"/><rect x="8" y="15" width="2.4" height="4.2" fill="#2c4f7c"/></g></svg>
<svg class="ic" style="left:131.0px;top:28.0px" width="24" height="24" viewBox="0 0 24 24"><g opacity="1"><rect x="2.5" y=".5" width="19" height="20.5" rx="2" fill="#6a96cf" stroke="#466fa5"/><rect x="5.5" y="1" width="13" height="8.2" fill="#f1f1f1" stroke="#8aa5c8" stroke-width=".5"/><path d="M7 3.2 h10 M7 5.2 h10 M7 7.2 h10" stroke="#555" stroke-width=".9"/><rect x="6.5" y="13.5" width="11.5" height="7" fill="#ececec" stroke="#5b81b4" stroke-width=".6"/><rect x="8" y="15" width="2.4" height="4.2" fill="#2c4f7c"/></g><rect x="14" y="14" width="10" height="10" rx="2" fill="#4f9450" stroke="#3f7f42" stroke-width=".6"/><path d="M16.5 21.5 l5 -5" stroke="#fff" stroke-width="2.3" stroke-linecap="round"/></svg>
<svg class="ic" style="left:169.0px;top:28.0px" width="24" height="24" viewBox="0 0 24 24"><path d="M.5 1.5 H16.5 L21.5 6.5 V16.5 H.5Z" fill="#fff" stroke="#777"/><path d="M16.5 1.5 V6.5 H21.5" fill="#f2f2f2" stroke="#999" stroke-width=".8"/><rect x="14" y="14" width="10" height="10" rx="2" fill="#cfa700"/><path d="M19 15.5 v7 M16 17.2 l6 3.6 M16 20.8 l6 -3.6" stroke="#fff" stroke-width="1.3" stroke-linecap="round"/><circle cx="19" cy="19" r="1.7" fill="#fff"/><circle cx="19" cy="19" r=".8" fill="#cfa700"/></svg>
<svg class="ic" style="left:207.0px;top:28.0px" width="24" height="24" viewBox="0 0 24 24"><path d="M.5 1.5 H16.5 L21.5 6.5 V16.5 H.5Z" fill="#fff" stroke="#777"/><path d="M16.5 1.5 V6.5 H21.5" fill="#f2f2f2" stroke="#999" stroke-width=".8"/><path d="M14.5 12 L22.5 21.5" stroke="#3a3000" stroke-width="4.2" stroke-linecap="round"/><path d="M14.8 12.4 L22.2 21.2" stroke="#e9c246" stroke-width="2.6" stroke-linecap="round"/><path d="M8.2 7.4 a3.6 3.6 0 1 0 5 -2.8 l.2 3 l-2.2 1.4 z" fill="#eee" stroke="#555" stroke-width=".9" stroke-linejoin="round"/><path d="M11.5 9 L15 13" stroke="#555" stroke-width="3.6"/><path d="M11.5 9 L15 13" stroke="#e8e8e8" stroke-width="2"/></svg>
<svg class="ic" style="left:254.0px;top:28.0px" width="24" height="24" viewBox="0 0 24 24"><g transform="translate(1.5 0)"><path d="M7.2 21.8 C5.5 18 3.4 14.6 1.8 11 C1.4 9.6 3 8.8 4 10 L6.6 13.6 V3.4 C6.6 1.4 9.4 1.4 9.4 3.4 V2.2 C9.4 .2 12.4 .2 12.4 2.2 V3.4 C12.4 1.6 15.2 1.6 15.2 3.6 V5.4 C15.2 3.8 17.8 3.8 17.8 5.8 V14.5 C17.8 17.6 17 19.6 16.2 21.8Z" fill="#fff" stroke="#111" stroke-width="1.2" stroke-linejoin="round"/><path d="M9.4 3.4 V10 M12.4 3.4 V10 M15.2 5.4 V10.4" stroke="#111" stroke-width="1.1"/></g></svg>
<svg class="ic" style="left:291.0px;top:28.0px" width="24" height="24" viewBox="0 0 24 24"><rect x="1.5" y=".5" width="16" height="11.500" fill="#fee94e" stroke="#111" stroke-width="1" stroke-dasharray="2 1.6"/><g transform="translate(1 0)" fill="#6a96cf" stroke="#466fa5" stroke-width=".5"><path d="M12 1.2 l4.2 4.2 h-2.4 v3 h-3.6 v-3 h-2.4z"/><path d="M12 22.8 l4.2 -4.2 h-2.4 v-3 h-3.6 v3 h-2.4z"/><path d="M1.4 12 l4.2 -4.2 v2.4 h3 v3.6 h-3 v2.4z"/><path d="M22.6 12 l-4.2 -4.2 v2.4 h-3 v3.6 h3 v2.4z"/></g></svg>
<svg class="ic" style="left:329.0px;top:28.0px" width="24" height="24" viewBox="0 0 24 24"><g opacity="1"><path d="M8.6 15.4 L1.4 22.6" stroke="#3a3000" stroke-width="3.4" stroke-linecap="butt"/><path d="M8 16 L1.8 22.2" stroke="#f5c211" stroke-width="2" /><path d="M10.2 13.8 L7.8 16.2" stroke="#111" stroke-width="2.6" stroke-linecap="round"/><circle cx="14.6" cy="9.4" r="7.9" fill="#f4f4f4" fill-opacity=".9" stroke="#8a8a8a" stroke-width="1.1"/><path d="M9 7.4 a6 6 0 0 1 8.6 -3.6" fill="none" stroke="#fff" stroke-width="1.4" stroke-opacity=".9"/><path d="M10.2 9.4 h8.8 M14.6 5 v8.8" stroke="#4f83c4" stroke-width="2.2"/></g></svg>
<svg class="ic" style="left:367.0px;top:28.0px" width="24" height="24" viewBox="0 0 24 24"><g opacity="1"><path d="M8.6 15.4 L1.4 22.6" stroke="#3a3000" stroke-width="3.4" stroke-linecap="butt"/><path d="M8 16 L1.8 22.2" stroke="#f5c211" stroke-width="2" /><path d="M10.2 13.8 L7.8 16.2" stroke="#111" stroke-width="2.6" stroke-linecap="round"/><circle cx="14.6" cy="9.4" r="7.9" fill="#f4f4f4" fill-opacity=".9" stroke="#8a8a8a" stroke-width="1.1"/><path d="M9 7.4 a6 6 0 0 1 8.6 -3.6" fill="none" stroke="#fff" stroke-width="1.4" stroke-opacity=".9"/><path d="M10.2 9.4 h8.8" stroke="#4f83c4" stroke-width="2.2"/></g></svg>
<svg class="ic" style="left:406.0px;top:28.0px" width="24" height="24" viewBox="0 0 24 24"><g opacity="0.45"><path d="M8.6 15.4 L1.4 22.6" stroke="#3a3000" stroke-width="3.4" stroke-linecap="butt"/><path d="M8 16 L1.8 22.2" stroke="#f5c211" stroke-width="2" /><path d="M10.2 13.8 L7.8 16.2" stroke="#111" stroke-width="2.6" stroke-linecap="round"/><circle cx="14.6" cy="9.4" r="7.9" fill="#f4f4f4" fill-opacity=".9" stroke="#8a8a8a" stroke-width="1.1"/><path d="M9 7.4 a6 6 0 0 1 8.6 -3.6" fill="none" stroke="#fff" stroke-width="1.4" stroke-opacity=".9"/><text x="14.6" y="12.6" font-family="'Liberation Sans',Arial,sans-serif" font-weight="bold" font-size="8.5" text-anchor="middle" fill="#555">1:1</text></g></svg>
<svg class="ic" style="left:444.0px;top:28.0px" width="24" height="24" viewBox="0 0 24 24"><g fill="#6a96cf"><path d="M5 .5 h7 l-2.4 2.4 l3 3 l-2.2 2.2 l-3 -3 L5 7.5z"/><path d="M23.5 .5 h-7 l2.4 2.4 l-3 3 l2.2 2.2 l3 -3 l2.4 2.4z"/><path d="M23.5 19.5 h-7 l2.4 -2.4 l-3 -3 l2.2 -2.2 l3 3 l2.4 -2.4z"/></g><g opacity="1"><path d="M8.6 15.4 L1.4 22.6" stroke="#3a3000" stroke-width="3.4" stroke-linecap="butt"/><path d="M8 16 L1.8 22.2" stroke="#f5c211" stroke-width="2" /><path d="M10.2 13.8 L7.8 16.2" stroke="#111" stroke-width="2.6" stroke-linecap="round"/><circle cx="14.6" cy="9.4" r="7.9" fill="#f6f6f6" fill-opacity=".9" stroke="#8a8a8a" stroke-width="1.1"/><path d="M9 7.4 a6 6 0 0 1 8.6 -3.6" fill="none" stroke="#fff" stroke-width="1.4" stroke-opacity=".9"/></g><g fill="#6a96cf"><path d="M6.2 .8 h5.4 l-1.9 1.9 l2.6 2.6 l-1.8 1.8 l-2.6 -2.6 l-1.7 1.9z"/><path d="M23.2 .8 h-5.4 l1.9 1.9 l-2.6 2.6 l1.8 1.8 l2.6 -2.6 l1.7 1.9z"/><path d="M23.2 18.4 h-5.4 l1.9 -1.9 l-2.6 -2.6 l1.8 -1.8 l2.6 2.6 l1.7 -1.9z"/></g></svg>
<svg class="ic" style="left:482.0px;top:28.0px" width="24" height="24" viewBox="0 0 24 24"><rect x="2" y="1.5" width="15" height="13" fill="#fee94e" stroke="#111" stroke-dasharray="2 1.6"/><g opacity="1"><path d="M8.6 15.4 L1.4 22.6" stroke="#3a3000" stroke-width="3.4" stroke-linecap="butt"/><path d="M8 16 L1.8 22.2" stroke="#f5c211" stroke-width="2" /><path d="M10.2 13.8 L7.8 16.2" stroke="#111" stroke-width="2.6" stroke-linecap="round"/><circle cx="14.6" cy="9.4" r="7.9" fill="#f3f0d0" fill-opacity=".9" stroke="#8a8a8a" stroke-width="1.1"/><path d="M9 7.4 a6 6 0 0 1 8.6 -3.6" fill="none" stroke="#fff" stroke-width="1.4" stroke-opacity=".9"/></g></svg>
<svg class="ic" style="left:520.0px;top:28.0px" width="24" height="24" viewBox="0 0 24 24"><rect x="5" y="4.5" width="15" height="13.5" fill="#d9c9dc" stroke="#a79aa9" stroke-width=".8"/><g opacity="1"><path d="M8.6 15.4 L1.4 22.6" stroke="#3a3000" stroke-width="3.4" stroke-linecap="butt"/><path d="M8 16 L1.8 22.2" stroke="#f5c211" stroke-width="2" /><path d="M10.2 13.8 L7.8 16.2" stroke="#111" stroke-width="2.6" stroke-linecap="round"/><circle cx="14.6" cy="9.4" r="7.9" fill="#f2eef3" fill-opacity=".9" stroke="#8a8a8a" stroke-width="1.1"/><path d="M9 7.4 a6 6 0 0 1 8.6 -3.6" fill="none" stroke="#fff" stroke-width="1.4" stroke-opacity=".9"/></g></svg>
<svg class="ic" style="left:558.0px;top:28.0px" width="24" height="24" viewBox="0 0 24 24"><g opacity="1"><path d="M8.6 15.4 L1.4 22.6" stroke="#3a3000" stroke-width="3.4" stroke-linecap="butt"/><path d="M8 16 L1.8 22.2" stroke="#f5c211" stroke-width="2" /><path d="M10.2 13.8 L7.8 16.2" stroke="#111" stroke-width="2.6" stroke-linecap="round"/><circle cx="14.6" cy="9.4" r="7.9" fill="#f4f4f4" fill-opacity=".9" stroke="#8a8a8a" stroke-width="1.1"/><path d="M9 7.4 a6 6 0 0 1 8.6 -3.6" fill="none" stroke="#fff" stroke-width="1.4" stroke-opacity=".9"/></g><rect x="13.5" y="12.5" width="10.5" height="10.5" fill="#5b88c6" stroke="#466fa5" stroke-width=".6"/><path d="M21.6 14.6 L16 17.8 L21.6 21" fill="none" stroke="#fff" stroke-width="1.8"/></svg>
<svg class="ic" style="left:596.0px;top:28.0px" width="24" height="24" viewBox="0 0 24 24"><g opacity=".5"><g opacity="1"><path d="M8.6 15.4 L1.4 22.6" stroke="#3a3000" stroke-width="3.4" stroke-linecap="butt"/><path d="M8 16 L1.8 22.2" stroke="#f5c211" stroke-width="2" /><path d="M10.2 13.8 L7.8 16.2" stroke="#111" stroke-width="2.6" stroke-linecap="round"/><circle cx="14.6" cy="9.4" r="7.9" fill="#f4f4f4" fill-opacity=".9" stroke="#8a8a8a" stroke-width="1.1"/><path d="M9 7.4 a6 6 0 0 1 8.6 -3.6" fill="none" stroke="#fff" stroke-width="1.4" stroke-opacity=".9"/></g><rect x="13.5" y="12.5" width="10.5" height="10.5" fill="#5b88c6" stroke="#466fa5" stroke-width=".6"/><path d="M16 14.6 L21.6 17.8 L16 21" fill="none" stroke="#fff" stroke-width="1.8"/></g></svg>
<svg class="ic" style="left:634.0px;top:28.0px" width="24" height="24" viewBox="0 0 24 24"><g fill="#4a86d0" stroke="#3a6fb5" stroke-width=".4"><path d="M2.2 10.5 C2.2 3.6 10.5 .2 16.4 4.2 L19.2 1.4 L20.2 10.4 L11.2 9.6 L13.8 6.8 C10.4 4.8 6.4 6.6 5.8 10.5Z"/><path d="M21.8 12 C21.8 18.9 13.5 22.3 7.6 18.3 L4.8 21.1 L3.8 12.1 L12.8 12.9 L10.2 15.7 C13.6 17.7 17.6 15.9 18.2 12Z"/></g><path d="M4 9 C5 5 10 3 15 5" fill="none" stroke="#9cc4f0" stroke-width="1.2"/><path d="M20 13.5 C19 17.5 14 19.5 9 17.5" fill="none" stroke="#2f62a5" stroke-width="1"/></svg>
<svg class="ic" style="left:681.0px;top:28.0px" width="24" height="24" viewBox="0 0 24 24"><circle cx="8.7" cy="8.6" r="8.2" fill="#5b8bcb" stroke="#7fa6db" stroke-width=".8"/><path d="M3 5.5 a7 7 0 0 1 10 -3.5" fill="none" stroke="#9dbde6" stroke-width="1.2"/><text x="8.9" y="13.6" font-family="'Liberation Serif',serif" font-style="italic" font-weight="bold" font-size="15" text-anchor="middle" fill="#fff">i</text><path transform="translate(11.2 10.2) rotate(-22) scale(0.95)" d="M0 0 L0 12.4 L2.9 9.8 L5.2 14.8 L7.3 13.8 L5 8.9 L8.9 8.9Z" fill="#fff" stroke="#222" stroke-width=".9" stroke-linejoin="round"/></svg>
<svg class="ic" style="left:725.0px;top:28.0px" width="24" height="24" viewBox="0 0 24 24"><g opacity=".5"><path d="M9 1 l1.6 1.6 l2.2 -.8 l.8 2.2 l2.2 .4 l-.2 2.4 l2 1.2 l-1.2 2 l1.2 2 l-2 1.2 l.2 2.4 l-2.2 .4 l-.8 2.2 l-2.2 -.8 L9 19 l-1.6 -1.6 l-2.2 .8 l-.8 -2.2 l-2.2 -.4 l.2 -2.4 l-2 -1.2 l1.2 -2 l-1.2 -2 l2 -1.2 l-.2 -2.4 l2.2 -.4 l.8 -2.2 l2.2 .8z" fill="#f4f4f4" stroke="#777" stroke-width=".8" stroke-dasharray="1.2 .8"/><circle cx="9" cy="10" r="5.6" fill="#6f9fd8" stroke="#5a86bd" stroke-width=".6"/><path d="M7 7 L12.2 10 L7 13z" fill="#fff"/><path transform="translate(13.6 13) rotate(-22) scale(0.8)" d="M0 0 L0 12.4 L2.9 9.8 L5.2 14.8 L7.3 13.8 L5 8.9 L8.9 8.9Z" fill="#fff" stroke="#555" stroke-width=".9" stroke-linejoin="round"/></g></svg>
<svg class="ic" style="left:775.0px;top:28.0px" width="24" height="24" viewBox="0 0 24 24"><rect x=".5" y=".5" width="13" height="13" fill="#fee94e" stroke="#b8b8b8"/><rect x="16.5" y=".5" width="7" height="13" fill="#ececec" stroke="#aaa"/><rect x=".5" y="16.5" width="13" height="7" fill="#ececec" stroke="#aaa"/><path transform="translate(7.4 6.9) rotate(-22) scale(1.08)" d="M0 0 L0 12.4 L2.9 9.8 L5.2 14.8 L7.3 13.8 L5 8.9 L8.9 8.9Z" fill="#fff" stroke="#222" stroke-width=".9" stroke-linejoin="round"/></svg>
<svg class="ic" style="left:820.0px;top:28.0px" width="24" height="24" viewBox="0 0 24 24"><rect x="2.5" y="3.5" width="14.5" height="14.5" fill="#fee94e" stroke="#d4aa00" stroke-dasharray="1.8 1.4"/><rect x="12.5" y="13.5" width="10" height="10" rx="2" fill="#e01b24"/><circle cx="17.5" cy="18.5" r="3.1" fill="#f4c4c6" stroke="#fff" stroke-width="1.1"/><path d="M15.5 20.5 l4 -4" stroke="#fff" stroke-width="1.3"/></svg>
<svg class="ic" style="left:857.0px;top:28.0px" width="24" height="24" viewBox="0 0 24 24"><text x="2.600" y="15.600" font-family="'Liberation Serif',serif" font-size="31" fill="#5b1d6e">&#949;</text><rect x="11.5" y="11.5" width="12" height="12" fill="#fee94e" stroke="#d4aa00" stroke-dasharray="1.4 1.2"/></svg>
<svg class="ic" style="left:895.0px;top:28.0px" width="24" height="24" viewBox="0 0 24 24"><rect x="2.5" y="2.5" width="19" height="19" fill="#fdfdfd" stroke="#2f5573" stroke-width="1.1"/><rect x="3" y="3" width="18" height="4.6" fill="#cfe0f3"/><path d="M4.5 5.3 h4.5 M11 5.3 h8.5" stroke="#2f5573" stroke-width="1.7"/><path d="M4.5 10 h4 M11 10 h8.5 M4.5 13 h4 M11 13 h8.5 M4.5 16 h4 M11 16 h8.5 M4.5 19 h4 M11 19 h8.5" stroke="#2f5573" stroke-width="1.1"/></svg>
<svg class="ic" style="left:933.0px;top:28.0px" width="24" height="24" viewBox="0 0 24 24"><g opacity=".8"><path d="M2.5 .5 V21 M21.5 .5 V21" stroke="#999" stroke-width="1"/><path d="M2.5 4 H21.5 M2.5 11 H21.5 M2.5 18 H21.5" stroke="#888" stroke-width=".9"/><rect x="1" y="21" width="22" height="2.2" rx="1" fill="#e0e0e0" stroke="#999" stroke-width=".7"/><g stroke-width=".8"><path d="M11.5 4 l2.4 -2.4 l2.4 2.4 l-2.4 2.4z M17 4 l2.4 -2.4 l2.4 2.4 l-2.4 2.4z" fill="#f2b9b9" stroke="#d55"/><path d="M5 11 l2.4 -2.4 l2.4 2.4 l-2.4 2.4z M10.5 11 l2.4 -2.4 l2.4 2.4 l-2.4 2.4z" fill="#bfe0bf" stroke="#6a6"/><path d="M4.5 18 l2.4 -2.4 l2.4 2.4 l-2.4 2.4z M16 18 l2.4 -2.4 l2.4 2.4 l-2.4 2.4z" fill="#c4d9ef" stroke="#79b"/></g></g></svg>
<svg class="ic" style="left:977.0px;top:28.0px" width="24" height="24" viewBox="0 0 24 24"><path d="M3.5 7.8 H20.5 M3.5 5 V10.6 M20.5 5 V10.6" stroke="#2f5f8a" stroke-width="1.5" fill="none"/><rect x="1.5" y="12.5" width="21" height="7" fill="#e6e9de" stroke="#666" stroke-width="1.1"/><path d="M4 13 v3 M6.7 13 v2 M9.400 13 v2 M12 13 v4 M14.700 13 v2 M17.400 13 v2 M20 13 v3" stroke="#555" stroke-width=".9"/></svg>
<svg class="ic" style="left:1021.0px;top:28.0px" width="24" height="24" viewBox="0 0 24 24"><g transform="translate(1.3 1.2) scale(.9)"><path d="M4 2.5 H19 a3.5 3.5 0 0 1 3.5 3.5 V12.5 a3.5 3.5 0 0 1 -3.5 3.5 H13.5 C12.5 18.5 10 20.5 6.5 21.5 C8.2 19.8 8.8 17.8 8.6 16 H4 a3.5 3.5 0 0 1 -3.5 -3.5 V6 a3.5 3.5 0 0 1 3.5 -3.5Z" fill="#f6e58a" stroke="#d9ad0c" stroke-width="1.3" stroke-linejoin="round"/><path d="M3 8 V6.5 a2 2 0 0 1 2 -2 H11" fill="none" stroke="#fdf6c8" stroke-width="1.3" stroke-linecap="round"/></g></svg>
<svg class="ic" style="left:1060.0px;top:28.0px" width="24" height="24" viewBox="0 0 24 24"><rect x="3.5" y="5.5" width="16" height="11.5" fill="#efefef" stroke="#444" stroke-width="1.2" stroke-dasharray="1.2 1.6"/><path d="M12.5 7.5 V4.6 H15 V2.6 H18 V7.5Z" fill="#fbdc2e" stroke="#c9a400" stroke-width=".9"/><rect x="13.5" y="13.5" width="10" height="10" rx="2" fill="#cfa700"/><path d="M18.5 15.0 v7 M15.5 16.7 l6 3.6 M15.5 20.3 l6 -3.6" stroke="#fff" stroke-width="1.3" stroke-linecap="round"/><circle cx="18.5" cy="18.5" r="1.7" fill="#fff"/><circle cx="18.5" cy="18.5" r=".8" fill="#cfa700"/></svg>
<svg class="ic" style="left:1097.0px;top:28.0px" width="24" height="24" viewBox="0 0 24 24"><rect x="3.5" y="5.5" width="16" height="11.5" fill="#efefef" stroke="#444" stroke-width="1.2" stroke-dasharray="1.2 1.6"/><path d="M12.5 7.5 V4.6 H15 V2.6 H18 V7.5Z" fill="#fbdc2e" stroke="#c9a400" stroke-width=".9"/></svg>
<svg class="ic" style="left:1144.0px;top:28.0px" width="24" height="24" viewBox="0 0 24 24"><path d="M4.5 2.5 H22.5 V18.5 H9 L1.5 22.5 L4.5 17Z" fill="#d5e3ef" stroke="#777" stroke-width="1"/><path d="M5.5 3.5 H21.5 V9" fill="none" stroke="#eef4fa" stroke-width="1"/><text x="13.5" y="15.6" font-family="'Liberation Serif',serif" font-size="15" text-anchor="middle" fill="#333">T</text></svg>
<svg class="ic" style="left:1194.0px;top:28.0px" width="24" height="24" viewBox="0 0 24 24"><rect x="1.5" y="1.5" width="19" height="20" fill="#6a96cf" stroke="#223" stroke-width="1"/><rect x="2" y="2" width="4.2" height="19" fill="#2a3e55"/><text x="13.2" y="17" font-family="'Liberation Serif',serif" font-size="15" text-anchor="middle" fill="#fff">?</text></svg>
<svg class="ic" style="left:1232.0px;top:28.0px" width="24" height="24" viewBox="0 0 24 24"><path transform="translate(0.6 0.6) rotate(-9) scale(1.12)" d="M0 0 L0 12.4 L2.9 9.8 L5.2 14.8 L7.3 13.8 L5 8.9 L8.9 8.9Z" fill="#fff" stroke="#333" stroke-width=".9" stroke-linejoin="round"/><text x="18.3" y="22" font-family="'Liberation Serif',serif" font-size="26" text-anchor="middle" fill="#000">?</text></svg>
<svg class="ic" style="left:17.0px;top:64.0px" width="24" height="24" viewBox="0 0 24 24"><g opacity=".55"><g opacity="1"><path d="M2.5 23.5 L7.6 19.9 L3.3 17.3 Z" fill="#e8e0d0" stroke="#555" stroke-width=".7"/><path d="M2.5 23.5 L4.5 22.0 L2.8 21.0 Z" fill="#333"/><path d="M7.6 19.9 L16.2 5.5 L11.9 2.9 L3.3 17.3 Z" fill="#e9936a" stroke="#c9683c" stroke-width=".7"/><path d="M5.5 18.6 L14.1 4.2" stroke="#c9683c" stroke-width="1.1"/><path d="M16.2 5.5 L18.1 2.3 L13.9 -0.3 L11.9 2.9 Z" fill="#f6f6f6" stroke="#888" stroke-width=".6"/></g><g opacity="1"><path d="M8.0 23.5 L13.2 20.0 L9.0 17.3 Z" fill="#e8e0d0" stroke="#555" stroke-width=".7"/><path d="M8.0 23.5 L10.1 22.1 L8.4 21.0 Z" fill="#333"/><path d="M13.2 20.0 L22.1 6.0 L17.9 3.3 L9.0 17.3 Z" fill="#ee8a5a" stroke="#c9683c" stroke-width=".7"/><path d="M11.1 18.6 L20.0 4.7" stroke="#c9683c" stroke-width="1.1"/><path d="M22.1 6.0 L24.1 2.8 L19.9 0.2 L17.9 3.3 Z" fill="#f6f6f6" stroke="#888" stroke-width=".6"/></g></g></svg>
<svg class="ic" style="left:54.0px;top:64.0px" width="24" height="24" viewBox="0 0 24 24"><g opacity="1"><path d="M4.6 23.6 L10.5 19.8 L5.8 16.7 Z" fill="#e8e0d0" stroke="#555" stroke-width=".7"/><path d="M4.6 23.6 L7.0 22.1 L5.1 20.8 Z" fill="#333"/><path d="M10.5 19.8 L18.8 7.0 L14.2 4.0 L5.8 16.7 Z" fill="#f3e03a" stroke="#b59b00" stroke-width=".7"/><path d="M8.1 18.2 L16.5 5.5" stroke="#b59b00" stroke-width="1.2"/><path d="M18.8 7.0 L21.1 3.5 L16.5 0.5 L14.2 4.0 Z" fill="#f6f6f6" stroke="#888" stroke-width=".6"/></g></svg>
<svg class="ic" style="left:93.0px;top:64.0px" width="24" height="24" viewBox="0 0 24 24"><g opacity="0.45"><rect x="2.5" y=".5" width="19" height="20.5" rx="2" fill="#6a96cf" stroke="#466fa5"/><rect x="5.5" y="1" width="13" height="8.2" fill="#f1f1f1" stroke="#8aa5c8" stroke-width=".5"/><path d="M7 3.2 h10 M7 5.2 h10 M7 7.2 h10" stroke="#555" stroke-width=".9"/><rect x="6.5" y="13.5" width="11.5" height="7" fill="#ececec" stroke="#5b81b4" stroke-width=".6"/><rect x="8" y="15" width="2.4" height="4.2" fill="#2c4f7c"/></g><g opacity=".6"><g opacity="1"><path d="M13.0 24.0 L16.7 21.4 L13.7 19.5 Z" fill="#e8e0d0" stroke="#555" stroke-width=".7"/><path d="M13.0 24.0 L14.5 23.0 L13.3 22.2 Z" fill="#333"/><path d="M16.7 21.4 L22.1 12.7 L19.0 10.8 L13.7 19.5 Z" fill="#ee8a5a" stroke="#c9683c" stroke-width=".7"/><path d="M15.2 20.5 L20.6 11.8" stroke="#c9683c" stroke-width="0.8"/><path d="M22.1 12.7 L23.5 10.4 L20.5 8.6 L19.0 10.8 Z" fill="#f6f6f6" stroke="#888" stroke-width=".6"/></g></g></svg>
<svg class="ic" style="left:131.0px;top:64.0px" width="24" height="24" viewBox="0 0 24 24"><g opacity=".55"><g fill="#a9d2a9" stroke="#7d9a80" stroke-width=".8"><circle cx="8.2" cy="4.9" r="2.6"/><circle cx="19.7" cy="4.9" r="2.6"/><circle cx="3" cy="14.6" r="2.6"/></g><rect x="14" y="14" width="10" height="10" rx="2" fill="#cfa700"/><path d="M19 15.5 v7 M16 17.2 l6 3.6 M16 20.8 l6 -3.6" stroke="#fff" stroke-width="1.3" stroke-linecap="round"/><circle cx="19" cy="19" r="1.7" fill="#fff"/><circle cx="19" cy="19" r=".8" fill="#cfa700"/></g></svg>
<svg class="ic" style="left:169.0px;top:64.0px" width="24" height="24" viewBox="0 0 24 24"><g opacity=".55"><path  d="M1.4 6.4 C1.4 2.6 5.5 .9 10.2 1.9 C13.6 2.7 16.2 2.4 18.8 2.2 C22.4 2.4 23 5.8 22.6 8.8 C22.2 11.8 19.8 13.3 17.6 12.7 C15.4 12.1 14.6 10.3 12.4 10 C9.8 9.7 8 11.9 5.4 11.5 C3 11.1 1.4 9.1 1.4 6.4Z" fill="#b9dcb9" stroke="#7d9a80" stroke-width=".9"/><rect x="14" y="14" width="10" height="10" fill="#5f88c2"/><rect x="14" y="14" width="10" height="3" fill="#8fb0dc"/><path d="M14.8 17.5 h4.5 v-2.4 l4.3 3.9 l-4.3 3.9 v-2.4 h-4.5z" fill="#fff"/></g></svg>
<svg class="ic" style="left:207.0px;top:64.0px" width="24" height="24" viewBox="0 0 24 24"><g opacity=".55"><path d="M2 21 L9 6.5 H22" fill="none" stroke="#555" stroke-width=".8"/><circle cx="9" cy="6.5" r="2.4" fill="#a9d2a9" stroke="#7d9a80" stroke-width=".8"/><path d="M13 21 L21 13" stroke="#c9b400" stroke-width="2.2" stroke-linecap="round"/><path d="M20 11.5 a2.6 2.6 0 1 1 1.5 4" fill="none" stroke="#777" stroke-width="1.4"/><path d="M22.5 22.5 L15 14.5" stroke="#d28a2a" stroke-width="3"/><path d="M12.5 15.5 L16.5 11.5 L18.5 13.5 L14.5 17.5z" fill="#ddd" stroke="#777" stroke-width=".7"/></g></svg>
<svg class="ic" style="left:245.0px;top:64.0px" width="24" height="24" viewBox="0 0 24 24"><g opacity=".6"><rect x="3.5" y="3.5" width="14.5" height="14.5" fill="#f3e36a" stroke="#c9a400" stroke-dasharray="2 1.5"/><rect x="14" y="14" width="10" height="10" rx="1.5" fill="#e2353d"/><path d="M16 16 l6 6 M22 16 l-6 6" stroke="#fff" stroke-width="1.9"/></g></svg>
<svg class="ic" style="left:283.0px;top:64.0px" width="24" height="24" viewBox="0 0 24 24"><g opacity=".6"><path d="M3 5 L17 15.5 M2.5 11 L18 9.5" stroke="#555" stroke-width="1.1" fill="none"/><path d="M1 10.8 L14 9.4 L14 10.6 Z" fill="#ddd" stroke="#666" stroke-width=".6"/><ellipse cx="19.5" cy="7.5" rx="3.3" ry="2" transform="rotate(-25 19.5 7.5)" fill="none" stroke="#d23" stroke-width="1.5"/><ellipse cx="19" cy="16.8" rx="3.3" ry="2" transform="rotate(40 19 16.8)" fill="none" stroke="#d23" stroke-width="1.5"/></g></svg>
<svg class="ic" style="left:321.0px;top:64.0px" width="24" height="24" viewBox="0 0 24 24"><g opacity=".5"><path d="M10.5 2.5 H17 L20.5 6 V17.5 H10.5Z" fill="#f4f4f4" stroke="#888"/><path d="M4.5 5.5 H12 L15.5 9 V21.5 H4.5Z" fill="#f8f8f8" stroke="#666"/><path d="M12 5.5 V9 H15.5" fill="none" stroke="#666" stroke-width=".8"/><path d="M6.5 12 h7 M6.5 14.5 h7 M6.5 17 h7 M6.5 19 h7" stroke="#888" stroke-width=".8"/></g></svg>
<svg class="ic" style="left:359.0px;top:64.0px" width="24" height="24" viewBox="0 0 24 24"><g opacity=".55"><rect x="3.5" y="2.5" width="17" height="20" fill="#f3dcc0" stroke="#c98a2a"/><rect x="8.5" y="1" width="7" height="3.6" rx="1" fill="#f6f6f6" stroke="#c98a2a"/><path d="M6.5 5.5 H14 L17.5 9 V20.5 H6.5Z" fill="#f8f8f8" stroke="#666"/><path d="M14 5.5 V9 H17.5" fill="none" stroke="#666" stroke-width=".8"/><path d="M8.5 11.5 h7 M8.5 14 h7 M8.5 16.5 h7 M8.5 18.5 h7" stroke="#888" stroke-width=".8"/></g></svg>
<svg class="ic" style="left:405.0px;top:64.0px" width="24" height="24" viewBox="0 0 24 24"><g opacity="1"><path d="M1 9.3 L5.6 4.4 H21.8 V14.2 H5.6 Z" fill="#f6d936" stroke="#c9a400" stroke-width=".9" stroke-linejoin="round"/><path d="M6 5.3 H21.2" stroke="#fff6b0" stroke-width=".9"/><text x="13.8" y="12.4" font-family="'Liberation Sans',Arial,sans-serif" font-weight="bold" font-size="9" fill="#222" text-anchor="middle" textLength="12.8" lengthAdjust="spacingAndGlyphs">abc</text></g></svg>
<svg class="ic" style="left:443.0px;top:64.0px" width="24" height="24" viewBox="0 0 24 24"><rect x="1.5" y="4" width="23" height="17.6" fill="#cfddee" stroke="#6f9fe0" stroke-width="1"/><g opacity="1"><path d="M2.4 9.3 L7.0 4.4 H21.099999999999998 V14.2 H7.0 Z" fill="#f6d936" stroke="#c9a400" stroke-width=".9" stroke-linejoin="round"/><path d="M7.4 5.3 H20.499999999999996" stroke="#fff6b0" stroke-width=".9"/><text x="11.8" y="12.4" font-family="'Liberation Sans',Arial,sans-serif" font-weight="bold" font-size="9" fill="#222" text-anchor="middle" textLength="8.4" lengthAdjust="spacingAndGlyphs">ab</text></g><path d="M17 8.5 L18 13.5" stroke="#f2f2f2" stroke-width="1.8" stroke-linecap="round"/><circle cx="19" cy="16.8" r="4.1" fill="#c0211f"/><circle cx="17.8" cy="15.5" r="1.2" fill="#e97a78"/></svg>
<svg class="ic" style="left:481.0px;top:64.0px" width="24" height="24" viewBox="0 0 24 24"><g opacity=".5"><g opacity="1"><path d="M1.4 9.3 L6.0 4.4 H21.7 V14.2 H6.0 Z" fill="#f6d936" stroke="#c9a400" stroke-width=".9" stroke-linejoin="round"/><path d="M6.4 5.3 H21.099999999999998" stroke="#fff6b0" stroke-width=".9"/><text x="10.8" y="12.4" font-family="'Liberation Sans',Arial,sans-serif" font-weight="bold" font-size="9" fill="#222" text-anchor="middle" textLength="8.4" lengthAdjust="spacingAndGlyphs">ab</text></g><path d="M18 8.5 L19 13.5" stroke="#f2f2f2" stroke-width="1.8" stroke-linecap="round"/><circle cx="20" cy="18.1" r="5" fill="#c0211f"/><circle cx="18.600" cy="16.500" r="1.4" fill="#e97a78"/></g></svg>
<svg class="ic" style="left:519.0px;top:64.0px" width="24" height="24" viewBox="0 0 24 24"><g opacity=".55"><g opacity="1"><path d="M1.2 9.3 L5.8 4.4 H22.0 V14.2 H5.8 Z" fill="#f6d936" stroke="#c9a400" stroke-width=".9" stroke-linejoin="round"/><path d="M6.2 5.3 H21.4" stroke="#fff6b0" stroke-width=".9"/><text x="14.0" y="12.4" font-family="'Liberation Sans',Arial,sans-serif" font-weight="bold" font-size="9" fill="#222" text-anchor="middle" textLength="12.8" lengthAdjust="spacingAndGlyphs">abc</text></g><path d="M9 18.6 C12 14.6 19.5 14.6 23 18.6 C19.5 22.4 12 22.4 9 18.6Z" fill="#fff" stroke="#444" stroke-width=".8"/><circle cx="16" cy="18.4" r="2.9" fill="#6f9fd8"/><circle cx="16" cy="18.4" r="1.2" fill="#223"/><path d="M10 16 C13 13.4 19.5 13.4 22 16" fill="none" stroke="#555" stroke-width=".6"/></g></svg>
<svg class="ic" style="left:557.0px;top:64.0px" width="24" height="24" viewBox="0 0 24 24"><g opacity=".55"><g opacity="1"><path d="M1 9.3 L5.6 4.4 H21.8 V14.2 H5.6 Z" fill="#f6d936" stroke="#c9a400" stroke-width=".9" stroke-linejoin="round"/><path d="M6 5.3 H21.2" stroke="#fff6b0" stroke-width=".9"/><text x="13.8" y="12.4" font-family="'Liberation Sans',Arial,sans-serif" font-weight="bold" font-size="9" fill="#222" text-anchor="middle" textLength="12.8" lengthAdjust="spacingAndGlyphs">abc</text></g><rect x="14" y="13.5" width="10" height="10" fill="#5f88c2"/><rect x="14" y="13.5" width="10" height="3" fill="#8fb0dc"/><path d="M14.8 17.0 h4.5 v-2.4 l4.3 3.9 l-4.3 3.9 v-2.4 h-4.5z" fill="#fff"/></g></svg>
<svg class="ic" style="left:595.0px;top:64.0px" width="24" height="24" viewBox="0 0 24 24"><g opacity=".55"><g opacity="1"><path d="M1 9.3 L5.6 4.4 H21.8 V14.2 H5.6 Z" fill="#f6d936" stroke="#c9a400" stroke-width=".9" stroke-linejoin="round"/><path d="M6 5.3 H21.2" stroke="#fff6b0" stroke-width=".9"/><text x="13.8" y="12.4" font-family="'Liberation Sans',Arial,sans-serif" font-weight="bold" font-size="9" fill="#222" text-anchor="middle" textLength="12.8" lengthAdjust="spacingAndGlyphs">abc</text></g><rect x="14" y="13.5" width="10" height="10" rx="1" fill="#5f88c2"/><rect x="14" y="13.5" width="10" height="3" rx="1" fill="#8fb0dc"/><path d="M22.3 18.8 a3 3 0 1 1 -3 -3" fill="none" stroke="#fff" stroke-width="1.5"/><path d="M18.6 14.1 l3 1.8 l-3 1.8z" fill="#fff"/><path d="M16 22.3 h3.5" stroke="#fff" stroke-width="1.2"/></g></svg>
<svg class="ic" style="left:633.0px;top:64.0px" width="24" height="24" viewBox="0 0 24 24"><g opacity=".55"><g opacity="1"><path d="M1 9.3 L5.6 4.4 H21.8 V14.2 H5.6 Z" fill="#f6d936" stroke="#c9a400" stroke-width=".9" stroke-linejoin="round"/><path d="M6 5.3 H21.2" stroke="#fff6b0" stroke-width=".9"/><text x="13.8" y="12.4" font-family="'Liberation Sans',Arial,sans-serif" font-weight="bold" font-size="9" fill="#222" text-anchor="middle" textLength="12.8" lengthAdjust="spacingAndGlyphs">abc</text></g><rect x="14" y="13.5" width="10" height="10" rx="1.5" fill="#cfa700"/><path d="M15.8 20.1 l5 -5 l1.6 1.6 l-5 5 l-2.6 1z" fill="#fff"/></g></svg>
<svg class="ic" style="left:17.0px;top:100.0px" width="24" height="24" viewBox="0 0 24 24"><g opacity=".55"><path d="M1.5 7.5 L8.5 1.5 V5 C16 4.5 19.5 9 17.5 14.5 C16 18.5 12 20.5 7.5 19.5 C12 18 13.5 14.5 12 12 C11 10.4 9.5 10 8.5 10 V13.5Z" fill="#a9d2a9" stroke="#7d9a80" stroke-width=".8" stroke-linejoin="round"/></g></svg>
<svg class="ic" style="left:54.0px;top:100.0px" width="24" height="24" viewBox="0 0 24 24"><g opacity=".55"><path d="M22.5 7.5 L15.5 1.5 V5 C8 4.5 4.5 9 6.5 14.5 C8 18.5 12 20.5 16.500 19.5 C12 18 10.5 14.5 12 12 C13 10.4 14.5 10 15.5 10 V13.5Z" fill="#a9d2a9" stroke="#7d9a80" stroke-width=".8" stroke-linejoin="round"/></g></svg>
<svg class="ic" style="left:93.0px;top:100.0px" width="24" height="24" viewBox="0 0 24 24"><g opacity=".55"><path  d="M1.4 6.4 C1.4 2.6 5.5 .9 10.2 1.9 C13.6 2.7 16.2 2.4 18.8 2.2 C22.4 2.4 23 5.8 22.6 8.8 C22.2 11.8 19.8 13.3 17.6 12.7 C15.4 12.1 14.6 10.3 12.4 10 C9.8 9.7 8 11.9 5.4 11.5 C3 11.1 1.4 9.1 1.4 6.4Z" fill="#b9dcb9" stroke="#7d9a80" stroke-width=".9"/><rect x="13" y="13" width="10" height="10" rx="1" fill="#5f88c2"/><rect x="13" y="13" width="10" height="3" rx="1" fill="#8fb0dc"/><path d="M21.3 18.3 a3 3 0 1 1 -3 -3" fill="none" stroke="#fff" stroke-width="1.5"/><path d="M17.6 13.6 l3 1.8 l-3 1.8z" fill="#fff"/><path d="M15 21.8 h3.5" stroke="#fff" stroke-width="1.2"/></g></svg>
<svg class="ic" style="left:131.0px;top:100.0px" width="24" height="24" viewBox="0 0 24 24"><g opacity=".6"><circle cx="8.5" cy="8" r="7.5" fill="#b9dcb9" stroke="#7d9a80" stroke-width=".8"/><path d="M11 9.5 H19.5 L23.5 16.5 L19.5 23.5 H11 L7 16.5Z" fill="#b3cbe0" stroke="#7a95b0" stroke-width=".8"/><path d="M7 7.5 C10 4 15.5 6 15.5 14" fill="none" stroke="#555" stroke-width="1"/><path d="M12.5 13 L15.5 17 L18.2 13" fill="none" stroke="#555" stroke-width="1"/></g></svg>
<svg class="ic" style="left:169.0px;top:100.0px" width="24" height="24" viewBox="0 0 24 24"><g opacity=".55"><g><path  d="M1.4 6.4 C1.4 2.6 5.5 .9 10.2 1.9 C13.6 2.7 16.2 2.4 18.8 2.2 C22.4 2.4 23 5.8 22.6 8.8 C22.2 11.8 19.8 13.3 17.6 12.7 C15.4 12.1 14.6 10.3 12.4 10 C9.8 9.7 8 11.9 5.4 11.5 C3 11.1 1.4 9.1 1.4 6.4Z" fill="#b9dcb9" stroke="#7d9a80" stroke-width=".9"/><ellipse cx="6.2" cy="5.8" rx="3.6" ry="2.6" transform="rotate(-12 6.2 5.8)" fill="#e6e6e6" stroke="#7d9a80" stroke-width=".8"/></g><rect x="14" y="14" width="10" height="10" rx="2" fill="#cfa700"/><path d="M19 15.5 v7 M16 17.2 l6 3.6 M16 20.8 l6 -3.6" stroke="#fff" stroke-width="1.3" stroke-linecap="round"/><circle cx="19" cy="19" r="1.7" fill="#fff"/><circle cx="19" cy="19" r=".8" fill="#cfa700"/></g></svg>
<svg class="ic" style="left:207.0px;top:100.0px" width="24" height="24" viewBox="0 0 24 24"><g opacity=".55"><g><path  d="M1.4 6.4 C1.4 2.6 5.5 .9 10.2 1.9 C13.6 2.7 16.2 2.4 18.8 2.2 C22.4 2.4 23 5.8 22.6 8.8 C22.2 11.8 19.8 13.3 17.6 12.7 C15.4 12.1 14.6 10.3 12.4 10 C9.8 9.7 8 11.9 5.4 11.5 C3 11.1 1.4 9.1 1.4 6.4Z" fill="#c9c9c9" stroke="#8a8a8a" stroke-width=".9"/></g><path d="M.8 21.500 C-.5 17 4 12.8 9.500 12.500 C13 14.500 10.500 20 7 22.300 C5 23.400 2 23.400 .8 21.500Z" fill="#a9d2a9" stroke="#7d9a80" stroke-width=".8"/><rect x="14" y="14" width="10" height="10" rx="2" fill="#cfa700"/><path d="M19 15.5 v7 M16 17.2 l6 3.6 M16 20.8 l6 -3.6" stroke="#fff" stroke-width="1.3" stroke-linecap="round"/><circle cx="19" cy="19" r="1.7" fill="#fff"/><circle cx="19" cy="19" r=".8" fill="#cfa700"/></g></svg>
<svg class="ic" style="left:245.0px;top:100.0px" width="24" height="24" viewBox="0 0 24 24"><g opacity=".55"><g><path  d="M1.4 6.4 C1.4 2.6 5.5 .9 10.2 1.9 C13.6 2.7 16.2 2.4 18.8 2.2 C22.4 2.4 23 5.8 22.6 8.8 C22.2 11.8 19.8 13.3 17.6 12.7 C15.4 12.1 14.6 10.3 12.4 10 C9.8 9.7 8 11.9 5.4 11.5 C3 11.1 1.4 9.1 1.4 6.4Z" fill="#b9dcb9" stroke="#7d9a80" stroke-width=".9"/><ellipse cx="6.2" cy="5.8" rx="3.6" ry="2.6" transform="rotate(-12 6.2 5.8)" fill="#e6e6e6" stroke="#7d9a80" stroke-width=".8"/></g><rect x="14" y="14" width="10" height="10" rx="1.5" fill="#e2666b"/><path d="M16 16 l6 6 M22 16 l-6 6" stroke="#fff" stroke-width="1.9"/></g></svg>
<svg class="ic" style="left:283.0px;top:100.0px" width="24" height="24" viewBox="0 0 24 24"><g opacity=".55"><g><path  d="M1.4 6.4 C1.4 2.6 5.5 .9 10.2 1.9 C13.6 2.7 16.2 2.4 18.8 2.2 C22.4 2.4 23 5.8 22.6 8.8 C22.2 11.8 19.8 13.3 17.6 12.7 C15.4 12.1 14.6 10.3 12.4 10 C9.8 9.7 8 11.9 5.4 11.5 C3 11.1 1.4 9.1 1.4 6.4Z" fill="#c9c9c9" stroke="#8a8a8a" stroke-width=".9"/></g><path d="M.8 21.500 C-.5 17 4 12.8 9.500 12.500 C13 14.500 10.500 20 7 22.300 C5 23.400 2 23.400 .8 21.500Z" fill="#a9d2a9" stroke="#7d9a80" stroke-width=".8"/><rect x="14" y="14" width="10" height="10" rx="1.5" fill="#e2666b"/><path d="M16 16 l6 6 M22 16 l-6 6" stroke="#fff" stroke-width="1.9"/></g></svg>
<svg class="ic" style="left:321.0px;top:100.0px" width="24" height="24" viewBox="0 0 24 24"><g opacity=".6"><path d="M2 10 L5 18 C8 17 10.5 13 12 10.5Z" fill="#f3e36a" stroke="#c9b84a" stroke-width=".8"/><g transform="translate(0 .5)"><path  d="M1.4 6.4 C1.4 2.6 5.5 .9 10.2 1.9 C13.6 2.7 16.2 2.4 18.8 2.2 C22.4 2.4 23 5.8 22.6 8.8 C22.2 11.8 19.8 13.3 17.6 12.7 C15.4 12.1 14.6 10.3 12.4 10 C9.8 9.7 8 11.9 5.4 11.5 C3 11.1 1.4 9.1 1.4 6.4Z" fill="#b9dcb9" stroke="#7d9a80" stroke-width=".9"/></g></g></svg>
<svg class="ic" style="left:359.0px;top:100.0px" width="24" height="24" viewBox="0 0 24 24"><g opacity=".75"><path d="M1 8 C.5 1 7 -.5 12.5 2 C16 .5 22.5 1 23 7.5 C23.5 13 21 17.5 17 16.5 C14.5 16 13 13.5 11.500 13.500 C9.5 13.5 8 17 5 16.500 C2 16 1 12 1 8Z" fill="#f6e36a" stroke="#c9b84a" stroke-width=".9"/><path d="M4.5 8 C4.500 4 8 3.500 12.500 5.500 C15.5 4 19.500 4.500 19.500 8 C19.5 11 18.500 13 17 12.500 C15 12 13.5 10 11.500 10 C9.5 10 8 13 6 12.500 C5 12 4.5 10 4.5 8Z" fill="#a9d2b9" stroke="#8aa" stroke-width=".6"/></g></svg>
<svg class="ic" style="left:397.0px;top:100.0px" width="24" height="24" viewBox="0 0 24 24"><g opacity=".6"><path d="M1 6 C1 1 7 0 10.500 2.500 L7.500 11.500 C4 13 1 10 1 6Z" fill="#b9dcb9" stroke="#7d9a80" stroke-width=".8"/><path d="M14 2.500 C17 1 21.500 2 21.500 6 C21.5 10 19 12 16 11 L13 6Z" fill="#b9dcb9" stroke="#7d9a80" stroke-width=".8"/><path d="M15.5 .5 L10 16 M9.500 3 L15.500 16" stroke="#777" stroke-width="1"/><ellipse cx="9" cy="20" rx="1.8" ry="3.4" transform="rotate(20 9 20)" fill="none" stroke="#d23" stroke-width="1.4"/><ellipse cx="16.500" cy="19.500" rx="1.8" ry="3.4" transform="rotate(-20 16.5 19.5)" fill="none" stroke="#d23" stroke-width="1.4"/></g></svg>
<svg class="ic" style="left:435.0px;top:100.0px" width="24" height="24" viewBox="0 0 24 24"><g opacity=".6"><path d="M1 6 C1 1 7 0 11 2.500 L10 12 C8 14 5 15 3 12 C1.5 10 1 8 1 6Z" fill="#b9dcb9" stroke="#7d9a80" stroke-width=".8"/><path d="M14 2.500 C18 0 24 2 23.500 7 C23 11 20 14 17 13 L13.500 10.500Z" fill="#b9dcb9" stroke="#7d9a80" stroke-width=".8"/><path d="M11 1.500 V12 M14 1.500 V11 M8.500 3.500 H16.500 M8.500 6.500 H16.500 M8.500 9.500 H16.500" stroke="#777" stroke-width="1"/><path d="M11 12 L13.500 15 L10 18 L14.500 22" fill="none" stroke="#666" stroke-width="1"/></g></svg>
<svg class="ic" style="left:473.0px;top:100.0px" width="24" height="24" viewBox="0 0 24 24"><g opacity=".65"><path d="M12.500 .5 H22 L17.500 9 L14 9.500 L13 12 L10.500 11 L11.500 8.500 L10 6Z" fill="#d6d6d6" stroke="#999" stroke-width=".8"/><rect x="3.5" y="18.500" width="18" height="5" fill="#a9c0d0" stroke="#6a8aa5" stroke-width=".8"/><path d="M12.500 14.500 L14.500 18.500 L12.500 22 L10.500 18.500Z" fill="#f3e79a" stroke="#6a8aa5" stroke-width=".6"/></g></svg>
<svg class="ic" style="left:511.0px;top:100.0px" width="24" height="24" viewBox="0 0 24 24"><g opacity=".75"><path d="M14 20.500 A8.5 8.500 0 1 1 20.500 9.500" fill="none" stroke="#6f9fe8" stroke-width="2.6"/><path d="M14 20.500 A8.5 8.500 0 0 1 4 9" fill="none" stroke="#4f83d0" stroke-width="2.6"/><path d="M16.500 8.500 L24 8 L21 14.500Z" fill="#6f9fe8"/><path d="M12 5.500 V17 M8 11.500 H16" stroke="#b0c4e0" stroke-width=".6" stroke-dasharray="1 1"/></g></svg>
<svg class="ic" style="left:557.0px;top:100.0px" width="24" height="24" viewBox="0 0 24 24"><g opacity="1" fill="#f0f0f0" stroke="#8a8a8a" stroke-width=".9"><path d="M7 3.5 H22.500 V21.500 H4"/><path d="M2 4.5 a2 2.6 0 0 1 4 0 V19 a2.2 2.2 0 0 1 -4 0z"/><path d="M7.5 3 a2 2.6 0 0 1 4 0 V17.5 a2.2 2.2 0 0 1 -4 0z"/></g><g opacity="1" stroke="#3f8a3f" stroke-width="1" fill="none" stroke-linecap="round"><path d="M14.5 16.8 L15.3 7.3"/><path d="M16.3 16.8 L16.6 5.3"/><path d="M17.9 16.8 L17.5 7.8"/><path d="M19.5 16.8 L20.0 4.8"/><path d="M21.1 16.8 L20.5 6.8"/><path d="M22.5 16.8 L22.7 6.0"/></g><rect x="14.2" y="13.5" width="10" height="10" rx="2" fill="#2f5573"/><path d="M16.4 19.1 v2.8 h5.6 v-2.8" fill="none" stroke="#fff" stroke-width="1.2"/><path d="M19.2 20.1 v-4 M17.0 17.9 l2.2 -2.2 l2.2 2.2" fill="none" stroke="#fff" stroke-width="1.2"/></svg>
<svg class="ic" style="left:595.0px;top:100.0px" width="24" height="24" viewBox="0 0 24 24"><g opacity="1" fill="#f0f0f0" stroke="#8a8a8a" stroke-width=".9"><path d="M7 3.5 H22.500 V21.500 H4"/><path d="M2 4.5 a2 2.6 0 0 1 4 0 V19 a2.2 2.2 0 0 1 -4 0z"/><path d="M7.5 3 a2 2.6 0 0 1 4 0 V17.5 a2.2 2.2 0 0 1 -4 0z"/></g><g opacity="1" stroke="#3f8a3f" stroke-width="1" fill="none" stroke-linecap="round"><path d="M14.5 16.8 L15.3 7.3"/><path d="M16.3 16.8 L16.6 5.3"/><path d="M17.9 16.8 L17.5 7.8"/><path d="M19.5 16.8 L20.0 4.8"/><path d="M21.1 16.8 L20.5 6.8"/><path d="M22.5 16.8 L22.7 6.0"/></g><rect x="14.2" y="13.5" width="10" height="10" rx="2" fill="#cfa700"/><path d="M19.2 15.0 v7 M16.2 16.7 l6 3.6 M16.2 20.3 l6 -3.6" stroke="#fff" stroke-width="1.3" stroke-linecap="round"/><circle cx="19.2" cy="18.5" r="1.7" fill="#fff"/><circle cx="19.2" cy="18.5" r=".8" fill="#cfa700"/></svg>
<svg class="ic" style="left:633.0px;top:100.0px" width="24" height="24" viewBox="0 0 24 24"><g opacity=".45"><g opacity="1" fill="#f0f0f0" stroke="#8a8a8a" stroke-width=".9"><path d="M7 3.5 H22.500 V21.500 H4"/><path d="M2 4.5 a2 2.6 0 0 1 4 0 V19 a2.2 2.2 0 0 1 -4 0z"/><path d="M7.5 3 a2 2.6 0 0 1 4 0 V17.5 a2.2 2.2 0 0 1 -4 0z"/></g><g opacity="1" stroke="#3f8a3f" stroke-width="1" fill="none" stroke-linecap="round"><path d="M14.5 16.8 L15.3 7.3"/><path d="M16.3 16.8 L16.6 5.3"/><path d="M17.9 16.8 L17.5 7.8"/><path d="M19.5 16.8 L20.0 4.8"/><path d="M21.1 16.8 L20.5 6.8"/><path d="M22.5 16.8 L22.7 6.0"/></g><rect x="14.2" y="13.5" width="10" height="10" rx="2" fill="#e2353d"/><path d="M16.0 18.5 h6.4" stroke="#fff" stroke-width="2.2"/></g></svg>
<svg class="ic" style="left:682.0px;top:100.0px" width="24" height="24" viewBox="0 0 24 24"><g opacity="1" fill="none" stroke="#777" stroke-width=".9"><path d="M.5 9 V22.5 H6.5"/><rect x="2.5" y="5.5" width="14" height="14" fill="#ececec"/></g><g opacity="1" transform="translate(0 0)"><path d="M3.5 1.5 L10.4 13.7 L16.4 2.3 L21.8 2.3" fill="none" stroke="#2f5573" stroke-width="1.1"/><g fill="#fff" stroke="#2f5573" stroke-width=".9"><circle cx="3.5" cy="1.5" r="1.4"/><circle cx="10.4" cy="13.7" r="1.4"/><circle cx="16.400" cy="2.300" r="1.4"/><circle cx="21.800" cy="2.300" r="1.4"/></g></g><g opacity="1" stroke="#3f8a3f" stroke-width="1" fill="none" stroke-linecap="round"><path d="M14.5 16 L15.3 8.5"/><path d="M16.3 16 L16.6 6.5"/><path d="M17.9 16 L17.5 9"/><path d="M19.5 16 L20.0 6"/><path d="M21.1 16 L20.5 8"/><path d="M22.5 16 L22.7 7.2"/></g><rect x="14" y="14" width="10" height="10" rx="2" fill="#5b9c51" stroke="#4a8a42" stroke-width=".6"/><path d="M16 19 h6 M19 16 v6" stroke="#fff" stroke-width="2.2"/></svg>
<svg class="ic" style="left:720.0px;top:100.0px" width="24" height="24" viewBox="0 0 24 24"><g opacity="1" fill="none" stroke="#777" stroke-width=".9"><path d="M.5 9 V22.5 H6.5"/><rect x="2.5" y="5.5" width="14" height="14" fill="#ececec"/></g><g opacity="1"><rect x="7.5" y="1.2" width="4" height="4" fill="#223f63"/><rect x="11.5" y="1.2" width="4" height="4" fill="#8fb4df"/><rect x="15.5" y="1.2" width="4" height="4" fill="#223f63"/><rect x="7.5" y="5.2" width="4" height="4" fill="#8fb4df"/><rect x="11.5" y="5.2" width="4" height="4" fill="#223f63"/><rect x="15.5" y="5.2" width="4" height="4" fill="#4f7fb5"/><rect x="7.5" y="9.2" width="4" height="4" fill="#223f63"/><rect x="11.5" y="9.2" width="4" height="4" fill="#4f7fb5"/></g><g opacity="1" stroke="#3f8a3f" stroke-width="1" fill="none" stroke-linecap="round"><path d="M14.5 16 L15.3 8.5"/><path d="M16.3 16 L16.6 6.5"/><path d="M17.9 16 L17.5 9"/><path d="M19.5 16 L20.0 6"/><path d="M21.1 16 L20.5 8"/><path d="M22.5 16 L22.7 7.2"/></g><rect x="14" y="14" width="10" height="10" rx="2" fill="#5b9c51" stroke="#4a8a42" stroke-width=".6"/><path d="M16 19 h6 M19 16 v6" stroke="#fff" stroke-width="2.2"/></svg>
<svg class="ic" style="left:758.0px;top:100.0px" width="24" height="24" viewBox="0 0 24 24"><g opacity=".5"><g opacity="1" fill="none" stroke="#777" stroke-width=".9"><path d="M.5 9 V22.5 H6.5"/><rect x="2.5" y="5.5" width="14" height="14" fill="#ececec"/></g><g opacity="1" transform="translate(0 0)"><path d="M3.5 1.5 L10.4 13.7 L16.4 2.3 L21.8 2.3" fill="none" stroke="#2f5573" stroke-width="1.1"/><g fill="#fff" stroke="#2f5573" stroke-width=".9"><circle cx="3.5" cy="1.5" r="1.4"/><circle cx="10.4" cy="13.7" r="1.4"/><circle cx="16.400" cy="2.300" r="1.4"/><circle cx="21.800" cy="2.300" r="1.4"/></g></g><g opacity="1" stroke="#3f8a3f" stroke-width="1" fill="none" stroke-linecap="round"><path d="M14.5 16 L15.3 8.5"/><path d="M16.3 16 L16.6 6.5"/><path d="M17.9 16 L17.5 9"/><path d="M19.5 16 L20.0 6"/><path d="M21.1 16 L20.5 8"/><path d="M22.5 16 L22.7 7.2"/></g><rect x="14" y="14" width="10" height="10" rx="2" fill="#cfa700"/><path d="M19 15.5 v7 M16 17.2 l6 3.6 M16 20.8 l6 -3.6" stroke="#fff" stroke-width="1.3" stroke-linecap="round"/><circle cx="19" cy="19" r="1.7" fill="#fff"/><circle cx="19" cy="19" r=".8" fill="#cfa700"/></g></svg>
<svg class="ic" style="left:796.0px;top:100.0px" width="24" height="24" viewBox="0 0 24 24"><g opacity=".5"><g opacity="1" fill="none" stroke="#777" stroke-width=".9"><path d="M.5 9 V22.5 H6.5"/><rect x="2.5" y="5.5" width="14" height="14" fill="#ececec"/></g><g opacity="1" transform="translate(0 0)"><path d="M3.5 1.5 L10.4 13.7 L16.4 2.3 L21.8 2.3" fill="none" stroke="#2f5573" stroke-width="1.1"/><g fill="#fff" stroke="#2f5573" stroke-width=".9"><circle cx="3.5" cy="1.5" r="1.4"/><circle cx="10.4" cy="13.7" r="1.4"/><circle cx="16.400" cy="2.300" r="1.4"/><circle cx="21.800" cy="2.300" r="1.4"/></g></g><g opacity="1" stroke="#3f8a3f" stroke-width="1" fill="none" stroke-linecap="round"><path d="M14.5 16 L15.3 8.5"/><path d="M16.3 16 L16.6 6.5"/><path d="M17.9 16 L17.5 9"/><path d="M19.5 16 L20.0 6"/><path d="M21.1 16 L20.5 8"/><path d="M22.5 16 L22.7 7.2"/></g><rect x="14" y="14" width="10" height="10" rx="1.5" fill="#cfa700"/><path d="M15.8 20.6 l5 -5 l1.6 1.6 l-5 5 l-2.6 1z" fill="#fff"/></g></svg>
<svg class="ic" style="left:834.0px;top:100.0px" width="24" height="24" viewBox="0 0 24 24"><g opacity=".55"><path d="M3 20.500 L13 11" stroke="#e8e23a" stroke-width="3" stroke-linecap="round"/><path d="M6.500 7.500 L17 18.500" stroke="#d28a2a" stroke-width="3"/><path d="M2.500 8 L10 3 L12.500 4.500 L4.500 11.500Z" fill="#eee" stroke="#777" stroke-width=".8"/><g opacity="1" stroke="#3f8a3f" stroke-width="1" fill="none" stroke-linecap="round"><path d="M12 22 L12.8 8.5"/><path d="M13.8 22 L14.100000000000001 6.5"/><path d="M15.4 22 L15.0 9"/><path d="M17 22 L17.5 6"/><path d="M18.6 22 L18.0 8"/><path d="M20 22 L20.2 7.2"/></g><g opacity="1" stroke="#3f8a3f" stroke-width="1" fill="none" stroke-linecap="round"><path d="M14 22 L14.8 12.5"/><path d="M15.8 22 L16.1 10.5"/><path d="M17.4 22 L17.0 13"/><path d="M19 22 L19.5 10"/><path d="M20.6 22 L20.0 12"/><path d="M22 22 L22.2 11.2"/></g></g></svg>
<svg class="ic" style="left:872.0px;top:100.0px" width="24" height="24" viewBox="0 0 24 24"><g opacity=".5"><path d="M5 4.500 H19.500 V21.500 H4" fill="#f0f0f0" stroke="#8a8a8a" stroke-width=".9"/><path d="M1.500 4.500 a2 2.600 0 0 1 4 0 V19 a2.200 2.200 0 0 1 -4 0z" fill="#f0f0f0" stroke="#8a8a8a" stroke-width=".9"/><rect x="8" y="7.500" width="8.500" height="11" fill="#c9e0f3" stroke="#2f5573" stroke-width="1" stroke-dasharray="2 1.500"/><g opacity="1" stroke="#3f8a3f" stroke-width="1" fill="none" stroke-linecap="round"><path d="M14 22 L14.8 8.5"/><path d="M15.8 22 L16.1 6.5"/><path d="M17.4 22 L17.0 9"/><path d="M19 22 L19.5 6"/><path d="M20.6 22 L20.0 8"/><path d="M22 22 L22.2 7.2"/></g></g></svg>
<svg class="ic" style="left:910.0px;top:100.0px" width="24" height="24" viewBox="0 0 24 24"><g opacity=".5"><path d="M5 4.500 H19.500 V21.500 H4" fill="#f0f0f0" stroke="#8a8a8a" stroke-width=".9"/><path d="M1.500 4.500 a2 2.600 0 0 1 4 0 V19 a2.200 2.200 0 0 1 -4 0z" fill="#f0f0f0" stroke="#8a8a8a" stroke-width=".9"/><rect x="8" y="7.500" width="8.500" height="11" fill="#c9e0f3" stroke="#2f5573" stroke-width="1" stroke-dasharray="2 1.500"/><g opacity="1" stroke="#3f8a3f" stroke-width="1" fill="none" stroke-linecap="round"><path d="M14 15 L14.8 7.5"/><path d="M15.8 15 L16.1 5.5"/><path d="M17.4 15 L17.0 8"/><path d="M19 15 L19.5 5"/><path d="M20.6 15 L20.0 7"/><path d="M22 15 L22.2 6.2"/></g><rect x="13.5" y="13.5" width="10" height="10" rx="1.5" fill="#cfa700"/><path d="M15.3 20.1 l5 -5 l1.6 1.6 l-5 5 l-2.6 1z" fill="#fff"/></g></svg>
<svg class="ic" style="left:12.0px;top:147.2px" width="24" height="24" viewBox="0 0 24 24"><path d="M3 3.500 L8.500 17.500 L15 4.500 L21.500 4" fill="none" stroke="#35597d" stroke-width="1.2"/><g fill="#f4f4f4" stroke="#35597d" stroke-width="1"><circle cx="3" cy="3.500" r="1.7"/><circle cx="8.500" cy="17.500" r="1.7"/><circle cx="15" cy="4.500" r="1.7"/><circle cx="21.500" cy="4" r="1.7"/></g><rect x="14" y="14" width="10" height="10" rx="2" fill="#5b9c51" stroke="#4a8a42" stroke-width=".6"/><path d="M16 19 h6 M19 16 v6" stroke="#fff" stroke-width="2.2"/></svg>
<svg class="ic" style="left:12.0px;top:185.2px" width="24" height="24" viewBox="0 0 24 24"><g opacity="1"><rect x="0.5" y="0.5" width="6.4" height="6.4" fill="#223f63"/><rect x="6.9" y="0.5" width="6.4" height="6.4" fill="#8fb4df"/><rect x="13.3" y="0.5" width="6.4" height="6.4" fill="#223f63"/><rect x="0.5" y="6.9" width="6.4" height="6.4" fill="#8fb4df"/><rect x="6.9" y="6.9" width="6.4" height="6.4" fill="#223f63"/><rect x="13.3" y="6.9" width="6.4" height="6.4" fill="#4f7fb5"/><rect x="0.5" y="13.3" width="6.4" height="6.4" fill="#223f63"/><rect x="6.9" y="13.3" width="6.4" height="6.4" fill="#4f7fb5"/></g><rect x="14" y="14" width="10" height="10" rx="2" fill="#5b9c51" stroke="#4a8a42" stroke-width=".6"/><path d="M16 19 h6 M19 16 v6" stroke="#fff" stroke-width="2.2"/></svg>
<svg class="ic" style="left:12.0px;top:223.2px" width="24" height="24" viewBox="0 0 24 24"><path d="M1 6 C0 2 4 0 7 1.500 C9 0 12 0 14 1 C17 0 19 3 18 7 C17.500 9.500 16.500 11 15.500 12 L17.500 12 C18.600 12 18.600 13.500 17.500 13.500 L14.500 13.800 C14.500 16 14 18 12 18.300 C10 18.500 9.500 17 9.500 15 L9.300 12.500 C7.500 13.500 5 13.500 3.500 11.500 C2 10 1.300 8 1 6Z" fill="#5b8bcb" stroke="#2f5a8f" stroke-width="1"/><path d="M7 2 C6 5 6.500 9 8.500 11 C9 8 9 5 10.500 3.500 M13.500 2.500 C15 5 14.500 9 13.500 11" fill="none" stroke="#2f5a8f" stroke-width="1"/><circle cx="12.300" cy="6" r=".7" fill="#dfe9f6"/><rect x="14" y="14" width="10" height="10" rx="2" fill="#5b9c51" stroke="#4a8a42" stroke-width=".6"/><path d="M16 19 h6 M19 16 v6" stroke="#fff" stroke-width="2.2"/></svg>
<svg class="ic" style="left:12.0px;top:261.2px" width="24" height="24" viewBox="0 0 24 24"><path d="M.4 24.300 C1.500 19 5 13 10.700 7.800 C14 4.800 18 2.500 22.400 .9 C22.800 3 22.600 5 22 6.500 C20.500 9.500 18 11.800 15.400 13.500 C12.500 15.500 9 17.500 6 19 C3.500 20.500 1.800 22 .4 24.300Z" fill="#8fb4e3" stroke="#2f5a8f" stroke-width=".9" stroke-linejoin="round"/><path d="M1 23.300 C4.500 16 11 8.500 21.500 2.200" fill="none" stroke="#2f5a8f" stroke-width=".8"/><path d="M8 13.500 C12 10.500 16 8 20.500 6 M6 16.500 C10 14 14 12 18 10" fill="none" stroke="#e6f0fb" stroke-width="1"/><rect x="14" y="14" width="10" height="10" rx="2" fill="#5b9c51" stroke="#4a8a42" stroke-width=".6"/><path d="M16 19 h6 M19 16 v6" stroke="#fff" stroke-width="2.2"/></svg>
<svg class="ic" style="left:12.0px;top:299.2px" width="24" height="24" viewBox="0 0 24 24"><path d="M.8 .8 C11 1.200 20.500 5 23.600 11.500 C17 13 8 16.500 .3 22.700 C7 15 7 8 .8 .8Z" fill="#5b8bcb" stroke="#1d3f6e" stroke-width="1" stroke-linejoin="round"/><path d="M6.500 1.800 C10.500 7 10.500 13.500 7.500 17.500 M12 3.300 C15.500 7.500 15.500 12 13.500 14.500 M17.500 6 C19.800 8.500 20 11 19 12.800" fill="none" stroke="#1d3f6e" stroke-width=".9"/><rect x="14" y="14" width="10" height="10" rx="2" fill="#5b9c51" stroke="#4a8a42" stroke-width=".6"/><path d="M16 19 h6 M19 16 v6" stroke="#fff" stroke-width="2.2"/></svg>
<svg class="ic" style="left:12.0px;top:337.2px" width="24" height="24" viewBox="0 0 24 24"><ellipse cx="12" cy="10.800" rx="11.600" ry="10.300" fill="#a9c7ea" stroke="#5b8bcb" stroke-width="1"/><path d="M3.500 5 C5.500 3.500 8.500 3.800 9.500 5.200 C9 6.800 7 7.200 6.300 8.500 C6 9.500 4.500 9.500 3.800 8.500 C3 7.500 3 6 3.500 5Z M11.500 4 C13.500 3 16.500 3.300 18 4.500 C18.500 6 17 7 15.500 7 C14 7.500 12.500 7 11.800 6Z M18.500 6.500 C20 6.500 21 8 20.500 9.500 C19.500 10 18.500 9 18.500 8Z M6.500 11 C8 10.500 9 11.500 8.800 13.500 C8.500 15.500 7.800 17 7 17.500 C6.300 16 6 13 6.500 11Z M12.500 9.500 C14.500 9 16 10.500 15.500 13 C15 15.500 14 17 13.300 16.500 C12.500 14.500 12 11.500 12.500 9.500Z" fill="#1d3f6e" opacity=".9"/><path d="M.5 10.800 H23.500 M12 .5 V21 M2.500 5.500 H21.500 M2.500 16 H21.500 M12 .5 Q5 10.800 12 21 M12 .5 Q19 10.800 12 21" fill="none" stroke="#eef4fb" stroke-width=".6"/><rect x="14" y="14" width="10" height="10" rx="2" fill="#5b9c51" stroke="#4a8a42" stroke-width=".6"/><path d="M16 19 h6 M19 16 v6" stroke="#fff" stroke-width="2.2"/></svg>
<svg class="ic" style="left:12.0px;top:375.3px" width="24" height="24" viewBox="0 0 24 24"><ellipse cx="12" cy="10.800" rx="11.400" ry="10.100" fill="#27497a" stroke="#1d2f4a" stroke-width="1.300"/><path d="M7.500 1.800 C10 .8 14 .8 16.500 1.800 L16.500 19.800 C14 20.800 10 20.800 7.500 19.800Z" fill="#6a96cf"/><path d="M1 7.300 H23 V14.300 H1Z" fill="#6a96cf" opacity=".55"/><path d="M7.800 7.300 H16.200 V14.300 H7.800Z" fill="#27497a"/><path d="M9.500 4.500 L12 2 L14.500 4.500Z M9.500 17.100 L12 19.600 L14.500 17.100Z" fill="#27497a"/><path d="M1.300 7.300 H22.700 M1.300 14.300 H22.700 M12 .7 Q4.500 10.800 12 20.900 M12 .7 Q19.500 10.800 12 20.900" fill="none" stroke="#eef4fb" stroke-width=".9"/><ellipse cx="12" cy="10.800" rx="11.400" ry="10.100" fill="none" stroke="#1d2f4a" stroke-width="1.300"/><rect x="14" y="14" width="10" height="10" rx="2" fill="#5b9c51" stroke="#4a8a42" stroke-width=".6"/><path d="M16 19 h6 M19 16 v6" stroke="#fff" stroke-width="2.2"/></svg>
<svg class="ic" style="left:12.0px;top:413.3px" width="24" height="24" viewBox="0 0 24 24"><g opacity="1"><ellipse cx="12" cy="10.8" rx="11.6" ry="10.3" fill="#e6edf6" stroke="#6f9fdf" stroke-width="1"/><path d="M.5 10.8 H23.5 M12 .5 V21 M3 4.500 Q12 8 21 4.500 M3 17 Q12 13.500 21 17 M12 .5 Q3 10.800 12 21 M12 .5 Q21 10.800 12 21" fill="none" stroke="#6f9fdf" stroke-width=".8"/></g><path d="M5.500 5.500 L10 15.500 L14.500 6 L18.500 5.500" fill="none" stroke="#223" stroke-width="1.1"/><g fill="#fff" stroke="#223" stroke-width=".9"><circle cx="5.500" cy="5.500" r="1.3"/><circle cx="10" cy="15.500" r="1.3"/><circle cx="14.500" cy="6" r="1.3"/><circle cx="18.500" cy="5.500" r="1.3"/></g><rect x="14" y="14" width="10" height="10" rx="2" fill="#5b9c51" stroke="#4a8a42" stroke-width=".6"/><path d="M16 19 h6 M19 16 v6" stroke="#fff" stroke-width="2.2"/></svg>
<svg class="ic" style="left:12.0px;top:451.2px" width="24" height="24" viewBox="0 0 24 24"><path d="M6.500 1.500 C10 -.500 15 1.500 15 6.500 C15 11 11.500 15 7 16.500 C6 17 5.500 15.800 6.500 15.200 C9 13.500 10.500 11.500 10.500 9.500 C8 10.500 5 9 5 6 C5 4 5.500 2.500 6.500 1.500Z" fill="#5b8bcb" stroke="#35597d" stroke-width=".9"/><rect x="14" y="14" width="10" height="10" rx="2" fill="#5b9c51" stroke="#4a8a42" stroke-width=".6"/><path d="M16 19 h6 M19 16 v6" stroke="#fff" stroke-width="2.2"/></svg>
<svg class="ic" style="left:12.0px;top:489.2px" width="24" height="24" viewBox="0 0 24 24"><path d="M3 3.500 L8.500 17.500 L15 4.500 L21.500 4" fill="none" stroke="#35597d" stroke-width="1.2"/><g fill="#f4f4f4" stroke="#35597d" stroke-width="1"><circle cx="3" cy="3.500" r="1.7"/><circle cx="8.500" cy="17.500" r="1.7"/><circle cx="15" cy="4.500" r="1.7"/><circle cx="21.500" cy="4" r="1.7"/></g><rect x="14" y="14" width="10" height="10" rx="2" fill="#cfa700"/><path d="M19 15.5 v7 M16 17.2 l6 3.6 M16 20.8 l6 -3.6" stroke="#fff" stroke-width="1.3" stroke-linecap="round"/><circle cx="19" cy="19" r="1.7" fill="#fff"/><circle cx="19" cy="19" r=".8" fill="#cfa700"/></svg>
<svg class="ic" style="left:12.0px;top:527.2px" width="24" height="24" viewBox="0 0 24 24"><g opacity=".5"><rect x="1.500" y="1.500" width="18" height="18" fill="#eee" stroke="#777" stroke-width=".9"/><rect x="14" y="14" width="10" height="10" rx="2" fill="#e2353d"/><path d="M15.8 19 h6.4" stroke="#fff" stroke-width="2.2"/></g></svg>
<svg class="abs" style="left:751.0px;top:42.5px" width="8" height="7" viewBox="0 0 8 7"><path d="M0 0 H8 L4 6.6Z" fill="#555"/></svg>
<svg class="abs" style="left:801.3px;top:42.5px" width="8" height="7" viewBox="0 0 8 7"><path d="M0 0 H8 L4 6.6Z" fill="#555"/></svg>
<svg class="abs" style="left:1003.0px;top:42.5px" width="8" height="7" viewBox="0 0 8 7"><path d="M0 0 H8 L4 6.6Z" fill="#555"/></svg>
<svg class="abs" style="left:1169.0px;top:42.5px" width="8" height="7" viewBox="0 0 8 7"><path d="M0 0 H8 L4 6.6Z" fill="#555"/></svg>
<svg class="abs" style="left:35.6px;top:83.5px" width="8" height="7" viewBox="0 0 8 7"><path d="M.9 0 H7.1 L4 4.200Z" fill="#777"/></svg>
<svg class="abs" style="left:38.0px;top:503.6px" width="8" height="7" viewBox="0 0 8 7"><path d="M0 0 H8 L4 6.6Z" fill="#555"/></svg>
</div></body></html>
